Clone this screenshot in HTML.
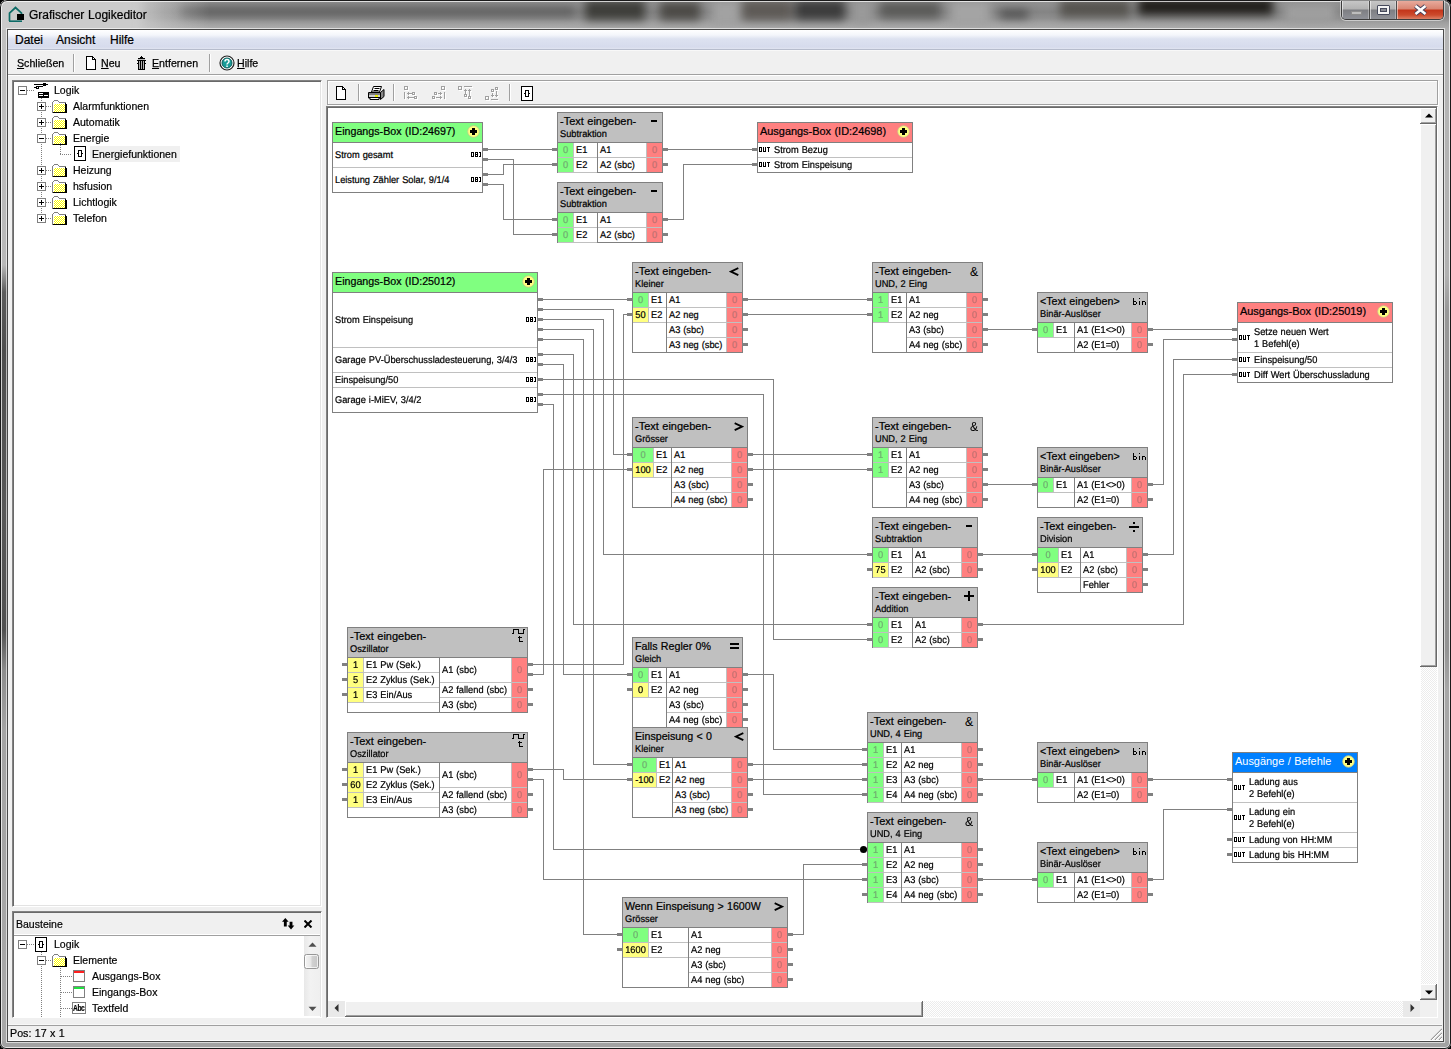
<!DOCTYPE html>
<html><head><meta charset="utf-8"><title>Grafischer Logikeditor</title>
<style>
html,body{margin:0;padding:0}
body{width:1451px;height:1049px;overflow:hidden;position:relative;font-family:"Liberation Sans",sans-serif;background:#9a9a9a}
#w div,#w svg.a,#w .sym{position:absolute}
.t{white-space:nowrap;word-spacing:.4px;-webkit-text-stroke:.22px}
.tr{font-size:11.2px;line-height:14px;color:#000;transform:scaleX(.94);transform-origin:0 0;-webkit-text-stroke:.2px}
.r{font-size:9.8px;transform:scaleX(.945);transform-origin:0 0;text-rendering:geometricPrecision;margin-top:1px}
.rc{font-size:9.8px;transform:scaleX(.945);text-align:center;text-rendering:geometricPrecision;margin-top:1px}
#w .t{color:#000}
#w{position:absolute;left:0;top:0;width:1451px;height:1049px;overflow:hidden}
.mn{font-size:12px;line-height:16px;color:#000}
.tb{font-size:11.2px;line-height:16px;color:#000;transform:scaleX(.95);transform-origin:0 0;-webkit-text-stroke:.25px}
u{text-decoration-thickness:1px;text-underline-offset:1px}
</style></head><body><svg width="0" height="0" style="position:absolute"><defs><pattern id="fd" width="2" height="2" patternUnits="userSpaceOnUse"><rect width="2" height="2" fill="#ffff00"/><rect width="1" height="1" fill="#fff"/><rect x="1" y="1" width="1" height="1" fill="#fff"/></pattern></defs></svg><div id="w">
<!-- glass frame -->
<div style="left:0;top:0;width:1451px;height:1049px;background:#000"></div>
<div style="left:0;top:0;width:1451px;height:1049px;border-radius:7px 7px 6px 6px;overflow:hidden;background:#a6a6a6">
 <div style="left:0;top:0;width:1451px;height:30px;background:linear-gradient(180deg,#949494 0,#8c8c8c 6px,#848484 12px,#8e8e8e 18px,#a0a0a0 23px,#adadad 29px)"></div>
 <div style="left:0;top:0;width:1451px;height:30px;filter:blur(5px)">
  <div style="left:-10px;top:-6px;width:150px;height:42px;background:#cdcdcd"></div>
  <div style="left:180px;top:7px;width:395px;height:9px;background:#5c5c5c"></div>
  <div style="left:585px;top:0px;width:60px;height:20px;background:#3e3e3a"></div>
  <div style="left:660px;top:2px;width:40px;height:18px;background:#4c4a46"></div>
  <div style="left:712px;top:0px;width:28px;height:26px;background:#a2a2a2"></div>
  <div style="left:742px;top:0px;width:50px;height:20px;background:#5e5a56"></div>
  <div style="left:795px;top:0px;width:50px;height:20px;background:#3c3c3c"></div>
  <div style="left:852px;top:0px;width:20px;height:24px;background:#9a9a9a"></div>
  <div style="left:880px;top:2px;width:60px;height:16px;background:#5a5a58"></div>
  <div style="left:950px;top:0px;width:40px;height:26px;background:#a4a4a4"></div>
  <div style="left:1000px;top:10px;width:28px;height:8px;background:#4a4a4a"></div>
  <div style="left:1060px;top:0px;width:70px;height:17px;background:#55534e"></div>
  <div style="left:1138px;top:-2px;width:135px;height:17px;background:#1f1d19"></div>
  <div style="left:1285px;top:4px;width:50px;height:18px;background:#a0a0a0"></div>
 </div>
 <div style="left:0;top:0;width:230px;height:30px;background:linear-gradient(90deg,#cbcbcb 0,#cbcbcb 130px,rgba(203,203,203,.5) 165px,rgba(203,203,203,0) 210px)"></div>
 <div style="left:0;top:30px;width:8px;height:1019px;background:linear-gradient(180deg,#c0c0c0 0,#b8b8b8 235px,#5c5c5c 262px,#4e4e4e 320px,#585858 480px,#505050 600px,#8c8c8c 640px,#a4a4a4 700px,#a8a8a8 1019px)"></div>
 <div style="left:1443px;top:30px;width:8px;height:1019px;background:linear-gradient(180deg,#b6b6b6 0,#b2b2b2 245px,#989898 280px,#949494 620px,#a8a8a8 660px,#a8a8a8 1019px)"></div>
 <div style="left:0;top:1041px;width:1451px;height:8px;background:#a2a2a2"></div>
 <div style="left:0;top:0;width:1451px;height:1049px;box-sizing:border-box;border:1px solid #1a1a1a;border-radius:7px 7px 6px 6px;box-shadow:inset 0 0 0 1px rgba(255,255,255,.72)"></div>
 <div style="left:6px;top:28px;width:1439px;height:1015px;box-sizing:border-box;border:1px solid rgba(255,255,255,.6)"></div>
</div>
<!-- title -->
<svg class="a" style="left:8px;top:6px" width="17" height="17"><path d="M1.5 15V7L7.5 1.5L13.5 7v2" fill="none" stroke="#0d6b66" stroke-width="1.700"/><path d="M1 15.2h13" stroke="#0d6b66" stroke-width="1.6"/><rect x="9" y="8" width="7" height="6" fill="#000"/></svg>
<div class="t" style="left:29px;top:7px;font-size:12px;line-height:16px;color:#000">Grafischer Logikeditor</div>
<!-- caption buttons -->
<div style="left:1341px;top:1px;width:103px;height:19px;border:1px solid #3c3c3c;border-top:0;border-radius:0 0 5px 5px;box-sizing:border-box;overflow:hidden;background:#888;box-shadow:0 0 0 1px rgba(255,255,255,.5)">
 <div style="left:0;top:0;width:27px;height:18px;background:linear-gradient(180deg,#c6c6c6 0,#b2b2b2 8px,#7d7e82 9px,#8f9198 18px);border-right:1px solid #4c4c4c;box-shadow:inset 1px 0 0 rgba(255,255,255,.55),inset -1px 0 0 rgba(255,255,255,.3)"></div>
 <div style="left:28px;top:0;width:26px;height:18px;background:linear-gradient(180deg,#c6c6c6 0,#b2b2b2 8px,#7d7e82 9px,#8f9198 18px);border-right:1px solid #4c4c4c;box-shadow:inset 1px 0 0 rgba(255,255,255,.55),inset -1px 0 0 rgba(255,255,255,.3)"></div>
 <div style="left:55px;top:0;width:47px;height:18px;background:linear-gradient(180deg,#e8aa9c 0,#d98572 8px,#c3351a 9px,#cc4a2c 14px,#dc8066 18px);box-shadow:inset 1px 0 0 rgba(255,255,255,.5),inset -1px 0 0 rgba(255,255,255,.4)"></div>
</div>
<div style="left:1351px;top:11px;width:11px;height:4px;background:#bdbdbd;border:1px solid #8d8d8d;box-sizing:border-box"></div>
<div style="left:1377px;top:5px;width:13px;height:10px;border:1px solid #464a5c;border-radius:1px;box-sizing:border-box;background:#f4f4f4"><div style="left:2px;top:2px;width:7px;height:4px;background:#8a8c94;border:1px solid #464a5c;box-sizing:border-box"></div></div>
<svg class="a" style="left:1413px;top:4px" width="15" height="12"><path d="M2.5 2l10 8M12.5 2l-10 8" stroke="#45405a" stroke-width="4.400" fill="none"/><path d="M2.5 2l10 8M12.5 2l-10 8" stroke="#fff" stroke-width="2.6" fill="none"/></svg>
<!-- client -->
<div style="left:7px;top:29px;width:1437px;height:1013px;box-sizing:border-box;border:1px solid #4a4a4a;background:#f0f0f0"></div>
<!-- menubar -->
<div style="left:8px;top:30px;width:1435px;height:20px;background:linear-gradient(180deg,#fff 0,#f4f6fb 5px,#dde2f0 9px,#d6dbec 17px,#e6e9f3 20px)"></div>
<div style="left:8px;top:49px;width:1435px;height:1px;background:#b6bccc"></div>
<div style="left:8px;top:50px;width:1435px;height:1px;background:#f8f8f8"></div>
<div class="t mn" style="left:15px;top:32px">Datei</div>
<div class="t mn" style="left:56px;top:32px">Ansicht</div>
<div class="t mn" style="left:110px;top:32px">Hilfe</div>
<!-- toolbar -->
<div class="t tb" style="left:17px;top:55px"><u>S</u>chließen</div>
<div style="left:73px;top:54px;width:1px;height:18px;background:#a0a0a0"></div><div style="left:74px;top:54px;width:1px;height:18px;background:#fff"></div>
<svg class="a" style="left:86px;top:56px" width="10" height="14" shape-rendering="crispEdges"><path d="M0.5 0.5h6l3 3v10h-9z" fill="#fff" stroke="#000"/><path d="M6.5 0.5v3h3" fill="none" stroke="#000"/></svg>
<div class="t tb" style="left:101px;top:55px"><u>N</u>eu</div>
<svg class="a" style="left:137px;top:56px" width="9" height="14" shape-rendering="crispEdges"><path d="M4 0h1v1h-1zM3 1h3v1h-3zM1 2h7v1h-7zM0 4h9v1h-9zM1 5h1v9h-1zM7 5h1v9h-1zM1 13h7v1h-7zM3 5h1v8h-1zM5 5h1v8h-1zM0 7h1v1h-1zM8 7h1v1h-1z" fill="#000"/><path d="M1 3h7v1h-7z" fill="#bbb"/><path d="M2 5h1v8h-1zM4 5h1v8h-1zM6 5h1v8h-1z" fill="#b0b0b0"/></svg>
<div class="t tb" style="left:152px;top:55px"><u>E</u>ntfernen</div>
<div style="left:209px;top:54px;width:1px;height:18px;background:#a0a0a0"></div><div style="left:210px;top:54px;width:1px;height:18px;background:#fff"></div>
<svg class="a" style="left:219px;top:55px" width="16" height="16"><circle cx="8" cy="8" r="7" fill="#fff" stroke="#222" stroke-width="1.2"/><circle cx="8" cy="8" r="5" fill="#1a9c98" stroke="#0a5c5a" stroke-width="1"/><path d="M6 6.5c0-2.6 4-2.6 4 0c0 1.5-2 1.5-2 3" fill="none" stroke="#fff" stroke-width="1.5"/><rect x="7.3" y="10.5" width="1.5" height="1.5" fill="#fff"/></svg>
<div class="t tb" style="left:237px;top:55px"><u>H</u>ilfe</div>
<div style="left:8px;top:74px;width:1435px;height:1px;background:#a0a0a0"></div>
<div style="left:8px;top:75px;width:1435px;height:1px;background:#fff"></div>
<div style="left:12px;top:80px;width:310px;height:827px;background:#fff;box-sizing:border-box;border:1px solid;border-color:#828282 #fff #fff #828282;box-shadow:inset 1px 1px 0 #696969,inset -1px -1px 0 #e3e3e3"></div>
<svg class="a" style="left:18px;top:86px" width="9" height="9" shape-rendering="crispEdges"><rect x="0.5" y="0.5" width="8" height="8" fill="#fff" stroke="#808080"/><rect x="2" y="4" width="5" height="1" fill="#000"/></svg>
<div style="left:27px;top:90px;width:8px;height:1px;background:repeating-linear-gradient(90deg,#808080 0 1px,transparent 1px 2px)"></div>
<svg class="a" style="left:34px;top:83px" width="16" height="16" shape-rendering="crispEdges"><path d="M0 1h14v1h-14zM0 4h3v1h-3zM5 3h4v1h-4zM9 2h1v1h-1zM2 3h1v3h-1zM2 3h3v1h-3zM4 3h1v3h-1zM2 5h3v1h-3zM9 0h1v3h-1zM9 0h3v1h-3zM11 0h1v3h-1zM9 2h3v1h-3z" fill="#000"/><rect x="4" y="9" width="11" height="6" fill="#000"/><rect x="5" y="10" width="4" height="1" fill="#fff"/><rect x="5" y="12" width="4" height="1" fill="#fff"/><rect x="10" y="12" width="4" height="1" fill="#fff"/></svg>
<div class="t tr" style="left:54px;top:83px;">Logik</div>
<div style="left:41px;top:98px;width:1px;height:120px;background:repeating-linear-gradient(180deg,#808080 0 1px,transparent 1px 2px)"></div>
<svg class="a" style="left:37px;top:102px" width="9" height="9" shape-rendering="crispEdges"><rect x="0.5" y="0.5" width="8" height="8" fill="#fff" stroke="#808080"/><rect x="2" y="4" width="5" height="1" fill="#000"/><rect x="4" y="2" width="1" height="5" fill="#000"/></svg>
<div style="left:46px;top:106px;width:6px;height:1px;background:repeating-linear-gradient(90deg,#808080 0 1px,transparent 1px 2px)"></div>
<svg class="a" style="left:52px;top:100px" width="15" height="13" shape-rendering="crispEdges"><path d="M2 0h4v1h-4zM1 1h1v1h-1zM6 1h1v1h-1zM7 2h6v1h-6zM0 2h1v10h-1z" fill="#808080"/><path d="M2 1h4v1h-4zM1 2h6v1h-6zM1 3h12v1h-12zM1 3h1v9h-1z" fill="#fff"/><rect x="2" y="4" width="11" height="8" fill="url(#fd)"/><path d="M13 3h1v9h-1zM1 12h14v1h-14zM14 4h1v9h-1z" fill="#000"/><path d="M13 2h1v1h-1zM0 12h1v1h-1z" fill="#808080"/></svg>
<div class="t tr" style="left:73px;top:99px;">Alarmfunktionen</div>
<svg class="a" style="left:37px;top:118px" width="9" height="9" shape-rendering="crispEdges"><rect x="0.5" y="0.5" width="8" height="8" fill="#fff" stroke="#808080"/><rect x="2" y="4" width="5" height="1" fill="#000"/><rect x="4" y="2" width="1" height="5" fill="#000"/></svg>
<div style="left:46px;top:122px;width:6px;height:1px;background:repeating-linear-gradient(90deg,#808080 0 1px,transparent 1px 2px)"></div>
<svg class="a" style="left:52px;top:116px" width="15" height="13" shape-rendering="crispEdges"><path d="M2 0h4v1h-4zM1 1h1v1h-1zM6 1h1v1h-1zM7 2h6v1h-6zM0 2h1v10h-1z" fill="#808080"/><path d="M2 1h4v1h-4zM1 2h6v1h-6zM1 3h12v1h-12zM1 3h1v9h-1z" fill="#fff"/><rect x="2" y="4" width="11" height="8" fill="url(#fd)"/><path d="M13 3h1v9h-1zM1 12h14v1h-14zM14 4h1v9h-1z" fill="#000"/><path d="M13 2h1v1h-1zM0 12h1v1h-1z" fill="#808080"/></svg>
<div class="t tr" style="left:73px;top:115px;">Automatik</div>
<svg class="a" style="left:37px;top:134px" width="9" height="9" shape-rendering="crispEdges"><rect x="0.5" y="0.5" width="8" height="8" fill="#fff" stroke="#808080"/><rect x="2" y="4" width="5" height="1" fill="#000"/></svg>
<div style="left:46px;top:138px;width:6px;height:1px;background:repeating-linear-gradient(90deg,#808080 0 1px,transparent 1px 2px)"></div>
<svg class="a" style="left:52px;top:132px" width="15" height="13" shape-rendering="crispEdges"><path d="M2 0h4v1h-4zM1 1h1v1h-1zM6 1h1v1h-1zM7 2h6v1h-6zM0 2h1v10h-1z" fill="#808080"/><path d="M2 1h4v1h-4zM1 2h6v1h-6zM1 3h12v1h-12zM1 3h1v9h-1z" fill="#fff"/><rect x="2" y="4" width="11" height="8" fill="url(#fd)"/><path d="M13 3h1v9h-1zM1 12h14v1h-14zM14 4h1v9h-1z" fill="#000"/><path d="M13 2h1v1h-1zM0 12h1v1h-1z" fill="#808080"/></svg>
<div class="t tr" style="left:73px;top:131px;">Energie</div>
<div style="left:60px;top:143px;width:1px;height:11px;background:repeating-linear-gradient(180deg,#808080 0 1px,transparent 1px 2px)"></div>
<div style="left:60px;top:154px;width:12px;height:1px;background:repeating-linear-gradient(90deg,#808080 0 1px,transparent 1px 2px)"></div>
<svg class="a" style="left:74px;top:146px" width="12" height="15" shape-rendering="crispEdges"><rect x="0.5" y="0.5" width="11" height="14" fill="#fff" stroke="#000"/><rect x="4.5" y="4.5" width="3" height="6" fill="none" stroke="#000"/><rect x="3" y="7" width="1" height="1" fill="#000"/><rect x="8" y="7" width="1" height="1" fill="#000"/></svg>
<div style="left:90px;top:146px;width:90px;height:16px;background:#f0f0f0"></div>
<div class="t tr" style="left:92px;top:147px;">Energiefunktionen</div>
<svg class="a" style="left:37px;top:166px" width="9" height="9" shape-rendering="crispEdges"><rect x="0.5" y="0.5" width="8" height="8" fill="#fff" stroke="#808080"/><rect x="2" y="4" width="5" height="1" fill="#000"/><rect x="4" y="2" width="1" height="5" fill="#000"/></svg>
<div style="left:46px;top:170px;width:6px;height:1px;background:repeating-linear-gradient(90deg,#808080 0 1px,transparent 1px 2px)"></div>
<svg class="a" style="left:52px;top:164px" width="15" height="13" shape-rendering="crispEdges"><path d="M2 0h4v1h-4zM1 1h1v1h-1zM6 1h1v1h-1zM7 2h6v1h-6zM0 2h1v10h-1z" fill="#808080"/><path d="M2 1h4v1h-4zM1 2h6v1h-6zM1 3h12v1h-12zM1 3h1v9h-1z" fill="#fff"/><rect x="2" y="4" width="11" height="8" fill="url(#fd)"/><path d="M13 3h1v9h-1zM1 12h14v1h-14zM14 4h1v9h-1z" fill="#000"/><path d="M13 2h1v1h-1zM0 12h1v1h-1z" fill="#808080"/></svg>
<div class="t tr" style="left:73px;top:163px;">Heizung</div>
<svg class="a" style="left:37px;top:182px" width="9" height="9" shape-rendering="crispEdges"><rect x="0.5" y="0.5" width="8" height="8" fill="#fff" stroke="#808080"/><rect x="2" y="4" width="5" height="1" fill="#000"/><rect x="4" y="2" width="1" height="5" fill="#000"/></svg>
<div style="left:46px;top:186px;width:6px;height:1px;background:repeating-linear-gradient(90deg,#808080 0 1px,transparent 1px 2px)"></div>
<svg class="a" style="left:52px;top:180px" width="15" height="13" shape-rendering="crispEdges"><path d="M2 0h4v1h-4zM1 1h1v1h-1zM6 1h1v1h-1zM7 2h6v1h-6zM0 2h1v10h-1z" fill="#808080"/><path d="M2 1h4v1h-4zM1 2h6v1h-6zM1 3h12v1h-12zM1 3h1v9h-1z" fill="#fff"/><rect x="2" y="4" width="11" height="8" fill="url(#fd)"/><path d="M13 3h1v9h-1zM1 12h14v1h-14zM14 4h1v9h-1z" fill="#000"/><path d="M13 2h1v1h-1zM0 12h1v1h-1z" fill="#808080"/></svg>
<div class="t tr" style="left:73px;top:179px;">hsfusion</div>
<svg class="a" style="left:37px;top:198px" width="9" height="9" shape-rendering="crispEdges"><rect x="0.5" y="0.5" width="8" height="8" fill="#fff" stroke="#808080"/><rect x="2" y="4" width="5" height="1" fill="#000"/><rect x="4" y="2" width="1" height="5" fill="#000"/></svg>
<div style="left:46px;top:202px;width:6px;height:1px;background:repeating-linear-gradient(90deg,#808080 0 1px,transparent 1px 2px)"></div>
<svg class="a" style="left:52px;top:196px" width="15" height="13" shape-rendering="crispEdges"><path d="M2 0h4v1h-4zM1 1h1v1h-1zM6 1h1v1h-1zM7 2h6v1h-6zM0 2h1v10h-1z" fill="#808080"/><path d="M2 1h4v1h-4zM1 2h6v1h-6zM1 3h12v1h-12zM1 3h1v9h-1z" fill="#fff"/><rect x="2" y="4" width="11" height="8" fill="url(#fd)"/><path d="M13 3h1v9h-1zM1 12h14v1h-14zM14 4h1v9h-1z" fill="#000"/><path d="M13 2h1v1h-1zM0 12h1v1h-1z" fill="#808080"/></svg>
<div class="t tr" style="left:73px;top:195px;">Lichtlogik</div>
<svg class="a" style="left:37px;top:214px" width="9" height="9" shape-rendering="crispEdges"><rect x="0.5" y="0.5" width="8" height="8" fill="#fff" stroke="#808080"/><rect x="2" y="4" width="5" height="1" fill="#000"/><rect x="4" y="2" width="1" height="5" fill="#000"/></svg>
<div style="left:46px;top:218px;width:6px;height:1px;background:repeating-linear-gradient(90deg,#808080 0 1px,transparent 1px 2px)"></div>
<svg class="a" style="left:52px;top:212px" width="15" height="13" shape-rendering="crispEdges"><path d="M2 0h4v1h-4zM1 1h1v1h-1zM6 1h1v1h-1zM7 2h6v1h-6zM0 2h1v10h-1z" fill="#808080"/><path d="M2 1h4v1h-4zM1 2h6v1h-6zM1 3h12v1h-12zM1 3h1v9h-1z" fill="#fff"/><rect x="2" y="4" width="11" height="8" fill="url(#fd)"/><path d="M13 3h1v9h-1zM1 12h14v1h-14zM14 4h1v9h-1z" fill="#000"/><path d="M13 2h1v1h-1zM0 12h1v1h-1z" fill="#808080"/></svg>
<div class="t tr" style="left:73px;top:211px;">Telefon</div>
<div style="left:12px;top:911px;width:310px;height:107px;background:#f0f0f0;box-sizing:border-box;border:1px solid;border-color:#828282 #fff #fff #828282;box-shadow:inset 1px 1px 0 #696969,inset -1px -1px 0 #e3e3e3"></div>
<div class="t tr" style="left:16px;top:917px;">Bausteine</div>
<svg class="a" style="left:282px;top:918px" width="14" height="12"><path d="M3.5 0L7 4H5v5H2V4H0zM9.5 12L6 8h2V4h3v4h2z" fill="#000" transform="scale(0.95)"/></svg>
<svg class="a" style="left:304px;top:920px" width="9" height="8"><path d="M0.5 0.5l7 7M7.5 0.5l-7 7" stroke="#000" stroke-width="2" fill="none"/></svg>
<div style="left:14px;top:934px;width:306px;height:1px;background:#fff"></div><div style="left:14px;top:935px;width:306px;height:81px;background:#fff;border-top:1px solid #a0a0a0"></div>
<svg class="a" style="left:18px;top:940px" width="9" height="9" shape-rendering="crispEdges"><rect x="0.5" y="0.5" width="8" height="8" fill="#fff" stroke="#808080"/><rect x="2" y="4" width="5" height="1" fill="#000"/></svg>
<div style="left:27px;top:944px;width:8px;height:1px;background:repeating-linear-gradient(90deg,#808080 0 1px,transparent 1px 2px)"></div>
<svg class="a" style="left:35px;top:937px" width="12" height="15" shape-rendering="crispEdges"><rect x="0.5" y="0.5" width="11" height="14" fill="#fff" stroke="#000"/><rect x="4.5" y="4.5" width="3" height="6" fill="none" stroke="#000"/><rect x="3" y="7" width="1" height="1" fill="#000"/><rect x="8" y="7" width="1" height="1" fill="#000"/></svg>
<div class="t tr" style="left:54px;top:937px;">Logik</div>
<div style="left:41px;top:952px;width:1px;height:66px;background:repeating-linear-gradient(180deg,#808080 0 1px,transparent 1px 2px)"></div>
<svg class="a" style="left:37px;top:956px" width="9" height="9" shape-rendering="crispEdges"><rect x="0.5" y="0.5" width="8" height="8" fill="#fff" stroke="#808080"/><rect x="2" y="4" width="5" height="1" fill="#000"/></svg>
<div style="left:46px;top:960px;width:6px;height:1px;background:repeating-linear-gradient(90deg,#808080 0 1px,transparent 1px 2px)"></div>
<svg class="a" style="left:52px;top:954px" width="15" height="13" shape-rendering="crispEdges"><path d="M2 0h4v1h-4zM1 1h1v1h-1zM6 1h1v1h-1zM7 2h6v1h-6zM0 2h1v10h-1z" fill="#808080"/><path d="M2 1h4v1h-4zM1 2h6v1h-6zM1 3h12v1h-12zM1 3h1v9h-1z" fill="#fff"/><rect x="2" y="4" width="11" height="8" fill="url(#fd)"/><path d="M13 3h1v9h-1zM1 12h14v1h-14zM14 4h1v9h-1z" fill="#000"/><path d="M13 2h1v1h-1zM0 12h1v1h-1z" fill="#808080"/></svg>
<div class="t tr" style="left:73px;top:953px;">Elemente</div>
<div style="left:60px;top:968px;width:1px;height:50px;background:repeating-linear-gradient(180deg,#808080 0 1px,transparent 1px 2px)"></div>
<div style="left:61px;top:976px;width:11px;height:1px;background:repeating-linear-gradient(90deg,#808080 0 1px,transparent 1px 2px)"></div>
<svg class="a" style="left:73px;top:970px" width="12" height="12" shape-rendering="crispEdges"><rect x="0.5" y="0.5" width="11" height="11" fill="#fff" stroke="#808080"/><rect x="1" y="1" width="10" height="2" fill="#ff2020"/></svg>
<div class="t tr" style="left:92px;top:969px;">Ausgangs-Box</div>
<div style="left:61px;top:992px;width:11px;height:1px;background:repeating-linear-gradient(90deg,#808080 0 1px,transparent 1px 2px)"></div>
<svg class="a" style="left:73px;top:986px" width="12" height="12" shape-rendering="crispEdges"><rect x="0.5" y="0.5" width="11" height="11" fill="#fff" stroke="#808080"/><rect x="1" y="1" width="10" height="2" fill="#20e040"/></svg>
<div class="t tr" style="left:92px;top:985px;">Eingangs-Box</div>
<div style="left:61px;top:1008px;width:11px;height:1px;background:repeating-linear-gradient(90deg,#808080 0 1px,transparent 1px 2px)"></div>
<svg class="a" style="left:72px;top:1002px" width="14" height="12" shape-rendering="crispEdges"><rect x="0.5" y="0.5" width="13" height="11" fill="#fff" stroke="#808080"/></svg><div class="t" style="left:73px;top:1003px;font-size:8.5px;line-height:10px;font-weight:bold;letter-spacing:-0.5px;transform:scaleX(0.78);transform-origin:0 0">Abc</div>
<div class="t tr" style="left:92px;top:1001px;">Textfeld</div>
<div style="left:304px;top:936px;width:16px;height:80px;background:linear-gradient(90deg,#e8e8e8,#f2f2f2 40%,#efefef)"></div>
<svg class="a" style="left:308px;top:942px" width="9" height="5"><path d="M0.5 4.800L4.5 0.5L8.5 4.800z" fill="#505050"/></svg>
<svg class="a" style="left:308px;top:1006px" width="9" height="6"><path d="M0.5 0.800L4.5 5L8.5 0.800z" fill="#505050"/></svg>
<div style="left:304px;top:954px;width:15px;height:15px;border:1px solid #979797;border-radius:2.5px;box-sizing:border-box;background:linear-gradient(90deg,#f4f4f4 0,#e6e6e6 48%,#d2d2d2 52%,#c6c6c6 100%);box-shadow:inset 0 0 0 1px rgba(255,255,255,.7)"></div>
<!-- right toolbar box -->
<div style="left:327px;top:80px;width:1111px;height:25px;border:1px solid #a0a0a0;box-sizing:border-box;box-shadow:inset 1px 1px 0 #fff,1px 1px 0 #fff"></div>
<svg class="a" style="left:336px;top:86px" width="10" height="14" shape-rendering="crispEdges"><path d="M0.5 0.5h6l3 3v10h-9z" fill="#fff" stroke="#000"/><path d="M6.5 0.5v3h3" fill="none" stroke="#000"/></svg>
<div style="left:358px;top:84px;width:1px;height:17px;background:#a0a0a0"></div><div style="left:359px;top:84px;width:1px;height:17px;background:#fff"></div>
<svg class="a" style="left:368px;top:86px" width="17" height="14"><path d="M5.5 0.5h8l-2 5.5h-8z" fill="#fff" stroke="#000"/><path d="M6.5 2.5h5M5.5 4.5h5" stroke="#000" stroke-width="1"/><path d="M12.5 6.5l3.5-3v7l-3.5 3z" fill="#8a8a8a" stroke="#000"/><path d="M0.5 6.5h12v5.5h-1.5v1.5h-9v-1.5h-1.5z" fill="#fff" stroke="#000"/><rect x="1" y="9" width="11" height="2" fill="#d0d0d0"/><rect x="7" y="9" width="3" height="2" fill="#f0f000"/><rect x="0" y="7.5" width="12" height="1" fill="#000"/><rect x="1" y="11" width="11" height="1" fill="#000"/></svg>
<div style="left:393px;top:84px;width:1px;height:17px;background:#a0a0a0"></div><div style="left:394px;top:84px;width:1px;height:17px;background:#fff"></div>
<svg class="a" style="left:398px;top:82px" width="110" height="22" shape-rendering="crispEdges"><g fill="#fff" transform="translate(1,1)"><path d="M6 4h4v4h-4zM7 5v2h2v-2zM14 10h3v3h-3zM15 11v1h1v-1zM16 14h3v3h-3zM17 15v1h1v-1zM43 4h4v4h-4zM44 5v2h2v-2zM36 10h3v3h-3zM37 11v1h1v-1zM34 14h3v3h-3zM35 15v1h1v-1zM60 4h4v4h-4zM61 5v2h2v-2zM66 12h3v3h-3zM67 13v1h1v-1zM70 14h3v3h-3zM71 15v1h1v-1zM87 14h4v4h-4zM88 15v2h2v-2zM93 7h3v3h-3zM94 8v1h1v-1zM97 5h3v3h-3zM98 6v1h1v-1z" fill-rule="evenodd"/><path d="M6 10h1v7h-1z"/><path d="M9 11h5v1h-5z"/><path d="M10 10h1v3h-1z"/><path d="M9 15h7v1h-7z"/><path d="M10 14h1v3h-1z"/><path d="M46 10h1v7h-1z"/><path d="M40 11h4v1h-4z"/><path d="M42 10h1v3h-1z"/><path d="M38 15h6v1h-6z"/><path d="M42 14h1v3h-1z"/><path d="M66 4h8v1h-8z"/><path d="M67 7h1v5h-1z"/><path d="M66 8h3v1h-3z"/><path d="M71 7h1v7h-1z"/><path d="M70 8h3v1h-3z"/><path d="M93 17h7v1h-7z"/><path d="M94 11h1v4h-1z"/><path d="M93 13h3v1h-3z"/><path d="M98 9h1v6h-1z"/><path d="M97 13h3v1h-3z"/></g><g fill="#a0a0a0"><path d="M6 4h4v4h-4zM7 5v2h2v-2zM14 10h3v3h-3zM15 11v1h1v-1zM16 14h3v3h-3zM17 15v1h1v-1zM43 4h4v4h-4zM44 5v2h2v-2zM36 10h3v3h-3zM37 11v1h1v-1zM34 14h3v3h-3zM35 15v1h1v-1zM60 4h4v4h-4zM61 5v2h2v-2zM66 12h3v3h-3zM67 13v1h1v-1zM70 14h3v3h-3zM71 15v1h1v-1zM87 14h4v4h-4zM88 15v2h2v-2zM93 7h3v3h-3zM94 8v1h1v-1zM97 5h3v3h-3zM98 6v1h1v-1z" fill-rule="evenodd"/><path d="M6 10h1v7h-1z"/><path d="M9 11h5v1h-5z"/><path d="M10 10h1v3h-1z"/><path d="M9 15h7v1h-7z"/><path d="M10 14h1v3h-1z"/><path d="M46 10h1v7h-1z"/><path d="M40 11h4v1h-4z"/><path d="M42 10h1v3h-1z"/><path d="M38 15h6v1h-6z"/><path d="M42 14h1v3h-1z"/><path d="M66 4h8v1h-8z"/><path d="M67 7h1v5h-1z"/><path d="M66 8h3v1h-3z"/><path d="M71 7h1v7h-1z"/><path d="M70 8h3v1h-3z"/><path d="M93 17h7v1h-7z"/><path d="M94 11h1v4h-1z"/><path d="M93 13h3v1h-3z"/><path d="M98 9h1v6h-1z"/><path d="M97 13h3v1h-3z"/></g></svg>
<div style="left:509px;top:84px;width:1px;height:17px;background:#a0a0a0"></div><div style="left:510px;top:84px;width:1px;height:17px;background:#fff"></div>
<svg class="a" style="left:521px;top:86px" width="12" height="15" shape-rendering="crispEdges"><rect x="0.5" y="0.5" width="11" height="14" fill="#fff" stroke="#000"/><rect x="4.5" y="4.5" width="3" height="6" fill="none" stroke="#000"/><rect x="3" y="7" width="1" height="1" fill="#000"/><rect x="8" y="7" width="1" height="1" fill="#000"/></svg>
<!-- canvas -->
<div style="left:326px;top:106px;width:1112px;height:912px;background:#fff;box-sizing:border-box;border:1px solid;border-color:#828282 #fff #fff #828282;box-shadow:inset 1px 1px 0 #696969"></div>
<div id="dia">
<div style="left:332px;top:122px;width:151px;height:71px;background:#fff;border:1px solid #808080;box-sizing:border-box;"></div>
<div style="left:333px;top:123px;width:149px;height:19px;background:#80ff80;"></div>
<div style="left:333px;top:142px;width:149px;height:1px;background:#808080;"></div>
<div class="t" style="left:335px;top:124px;font-size:10.7px;line-height:14px;">Eingangs-Box (ID:24697)</div>
<svg class="a" style="left:467px;top:125px" width="13" height="13" viewBox="0 0 13 13"><circle cx="6.5" cy="6.5" r="5.8" fill="#ffff80" stroke="#c8c88a" stroke-width="0.8"/><path d="M5 3h3v2h2v3h-2v2h-3v-2h-2v-3h2z" fill="#000"/></svg>
<div class="t r" style="left:335px;top:149px;line-height:12px;">Strom gesamt</div>
<svg class="a" style="left:471px;top:152px" width="10" height="5" viewBox="0 0 10 5" shape-rendering="crispEdges"><path d="M0 0h3v5h-3zM1 1v3h1v-3zM4 0h3v5h-3zM5 1v1h1v-1zM5 3v1h1v-1zM8 0h2v5h-2v-1h1v-3h-1z" fill="#000" fill-rule="evenodd"/></svg>
<div style="left:333px;top:167px;width:149px;height:1px;background:#c0c0c0;"></div>
<div style="left:483px;top:148px;width:5px;height:3px;background:#808080;"></div>
<div style="left:483px;top:158px;width:5px;height:3px;background:#808080;"></div>
<div class="t r" style="left:335px;top:174px;line-height:12px;">Leistung Zähler Solar, 9/1/4</div>
<svg class="a" style="left:471px;top:177px" width="10" height="5" viewBox="0 0 10 5" shape-rendering="crispEdges"><path d="M0 0h3v5h-3zM1 1v3h1v-3zM4 0h3v5h-3zM5 1v1h1v-1zM5 3v1h1v-1zM8 0h2v5h-2v-1h1v-3h-1z" fill="#000" fill-rule="evenodd"/></svg>
<div style="left:483px;top:173px;width:5px;height:3px;background:#808080;"></div>
<div style="left:483px;top:183px;width:5px;height:3px;background:#808080;"></div>
<div style="left:757px;top:122px;width:156px;height:51px;background:#fff;border:1px solid #808080;box-sizing:border-box;"></div>
<div style="left:758px;top:123px;width:154px;height:19px;background:#ff8080;"></div>
<div style="left:758px;top:142px;width:154px;height:1px;background:#808080;"></div>
<div class="t" style="left:760px;top:124px;font-size:10.93px;line-height:14px;">Ausgangs-Box (ID:24698)</div>
<svg class="a" style="left:897px;top:125px" width="13" height="13" viewBox="0 0 13 13"><circle cx="6.5" cy="6.5" r="5.8" fill="#ffff80" stroke="#c8c88a" stroke-width="0.8"/><path d="M5 3h3v2h2v3h-2v2h-3v-2h-2v-3h2z" fill="#000"/></svg>
<div class="t r" style="left:774px;top:144px;line-height:12px;">Strom Bezug</div>
<svg class="a" style="left:759px;top:147px" width="11" height="5" viewBox="0 0 11 5" shape-rendering="crispEdges"><path d="M0 0h3v5h-3zM1 1v3h1v-3zM4 0h1v4h1v-4h1v5h-3zM8 0h3v1h-1v4h-1v-4h-1z" fill="#000" fill-rule="evenodd"/></svg>
<div style="left:758px;top:157px;width:154px;height:1px;background:#c0c0c0;"></div>
<div style="left:752px;top:148px;width:5px;height:3px;background:#808080;"></div>
<div class="t r" style="left:774px;top:159px;line-height:12px;">Strom Einspeisung</div>
<svg class="a" style="left:759px;top:162px" width="11" height="5" viewBox="0 0 11 5" shape-rendering="crispEdges"><path d="M0 0h3v5h-3zM1 1v3h1v-3zM4 0h1v4h1v-4h1v5h-3zM8 0h3v1h-1v4h-1v-4h-1z" fill="#000" fill-rule="evenodd"/></svg>
<div style="left:752px;top:163px;width:5px;height:3px;background:#808080;"></div>
<div style="left:332px;top:272px;width:206px;height:141px;background:#fff;border:1px solid #808080;box-sizing:border-box;"></div>
<div style="left:333px;top:273px;width:204px;height:19px;background:#80ff80;"></div>
<div style="left:333px;top:292px;width:204px;height:1px;background:#808080;"></div>
<div class="t" style="left:335px;top:274px;font-size:10.7px;line-height:14px;">Eingangs-Box (ID:25012)</div>
<svg class="a" style="left:522px;top:275px" width="13" height="13" viewBox="0 0 13 13"><circle cx="6.5" cy="6.5" r="5.8" fill="#ffff80" stroke="#c8c88a" stroke-width="0.8"/><path d="M5 3h3v2h2v3h-2v2h-3v-2h-2v-3h2z" fill="#000"/></svg>
<div class="t r" style="left:335px;top:314px;line-height:12px;">Strom Einspeisung</div>
<svg class="a" style="left:526px;top:317px" width="10" height="5" viewBox="0 0 10 5" shape-rendering="crispEdges"><path d="M0 0h3v5h-3zM1 1v3h1v-3zM4 0h3v5h-3zM5 1v1h1v-1zM5 3v1h1v-1zM8 0h2v5h-2v-1h1v-3h-1z" fill="#000" fill-rule="evenodd"/></svg>
<div style="left:333px;top:347px;width:204px;height:1px;background:#c0c0c0;"></div>
<div style="left:538px;top:298px;width:5px;height:3px;background:#808080;"></div>
<div style="left:538px;top:308px;width:5px;height:3px;background:#808080;"></div>
<div style="left:538px;top:318px;width:5px;height:3px;background:#808080;"></div>
<div style="left:538px;top:328px;width:5px;height:3px;background:#808080;"></div>
<div style="left:538px;top:338px;width:5px;height:3px;background:#808080;"></div>
<div class="t r" style="left:335px;top:354px;line-height:12px;">Garage PV-Überschussladesteuerung, 3/4/3</div>
<svg class="a" style="left:526px;top:357px" width="10" height="5" viewBox="0 0 10 5" shape-rendering="crispEdges"><path d="M0 0h3v5h-3zM1 1v3h1v-3zM4 0h3v5h-3zM5 1v1h1v-1zM5 3v1h1v-1zM8 0h2v5h-2v-1h1v-3h-1z" fill="#000" fill-rule="evenodd"/></svg>
<div style="left:333px;top:372px;width:204px;height:1px;background:#c0c0c0;"></div>
<div style="left:538px;top:353px;width:5px;height:3px;background:#808080;"></div>
<div style="left:538px;top:363px;width:5px;height:3px;background:#808080;"></div>
<div class="t r" style="left:335px;top:374px;line-height:12px;">Einspeisung/50</div>
<svg class="a" style="left:526px;top:377px" width="10" height="5" viewBox="0 0 10 5" shape-rendering="crispEdges"><path d="M0 0h3v5h-3zM1 1v3h1v-3zM4 0h3v5h-3zM5 1v1h1v-1zM5 3v1h1v-1zM8 0h2v5h-2v-1h1v-3h-1z" fill="#000" fill-rule="evenodd"/></svg>
<div style="left:333px;top:387px;width:204px;height:1px;background:#c0c0c0;"></div>
<div style="left:538px;top:378px;width:5px;height:3px;background:#808080;"></div>
<div class="t r" style="left:335px;top:394px;line-height:12px;">Garage i-MiEV, 3/4/2</div>
<svg class="a" style="left:526px;top:397px" width="10" height="5" viewBox="0 0 10 5" shape-rendering="crispEdges"><path d="M0 0h3v5h-3zM1 1v3h1v-3zM4 0h3v5h-3zM5 1v1h1v-1zM5 3v1h1v-1zM8 0h2v5h-2v-1h1v-3h-1z" fill="#000" fill-rule="evenodd"/></svg>
<div style="left:538px;top:393px;width:5px;height:3px;background:#808080;"></div>
<div style="left:538px;top:403px;width:5px;height:3px;background:#808080;"></div>
<div style="left:1237px;top:302px;width:156px;height:81px;background:#fff;border:1px solid #808080;box-sizing:border-box;"></div>
<div style="left:1238px;top:303px;width:154px;height:19px;background:#ff8080;"></div>
<div style="left:1238px;top:322px;width:154px;height:1px;background:#808080;"></div>
<div class="t" style="left:1240px;top:304px;font-size:10.93px;line-height:14px;">Ausgangs-Box (ID:25019)</div>
<svg class="a" style="left:1377px;top:305px" width="13" height="13" viewBox="0 0 13 13"><circle cx="6.5" cy="6.5" r="5.8" fill="#ffff80" stroke="#c8c88a" stroke-width="0.8"/><path d="M5 3h3v2h2v3h-2v2h-3v-2h-2v-3h2z" fill="#000"/></svg>
<div class="t r" style="left:1254px;top:326px;line-height:12px;">Setze neuen Wert</div>
<div class="t r" style="left:1254px;top:338px;line-height:12px;">1 Befehl(e)</div>
<svg class="a" style="left:1239px;top:335px" width="11" height="5" viewBox="0 0 11 5" shape-rendering="crispEdges"><path d="M0 0h3v5h-3zM1 1v3h1v-3zM4 0h1v4h1v-4h1v5h-3zM8 0h3v1h-1v4h-1v-4h-1z" fill="#000" fill-rule="evenodd"/></svg>
<div style="left:1238px;top:352px;width:154px;height:1px;background:#c0c0c0;"></div>
<div style="left:1232px;top:328px;width:5px;height:3px;background:#808080;"></div>
<div style="left:1232px;top:338px;width:5px;height:3px;background:#808080;"></div>
<div class="t r" style="left:1254px;top:354px;line-height:12px;">Einspeisung/50</div>
<svg class="a" style="left:1239px;top:357px" width="11" height="5" viewBox="0 0 11 5" shape-rendering="crispEdges"><path d="M0 0h3v5h-3zM1 1v3h1v-3zM4 0h1v4h1v-4h1v5h-3zM8 0h3v1h-1v4h-1v-4h-1z" fill="#000" fill-rule="evenodd"/></svg>
<div style="left:1238px;top:367px;width:154px;height:1px;background:#c0c0c0;"></div>
<div style="left:1232px;top:358px;width:5px;height:3px;background:#808080;"></div>
<div class="t r" style="left:1254px;top:369px;line-height:12px;">Diff Wert Überschussladung</div>
<svg class="a" style="left:1239px;top:372px" width="11" height="5" viewBox="0 0 11 5" shape-rendering="crispEdges"><path d="M0 0h3v5h-3zM1 1v3h1v-3zM4 0h1v4h1v-4h1v5h-3zM8 0h3v1h-1v4h-1v-4h-1z" fill="#000" fill-rule="evenodd"/></svg>
<div style="left:1232px;top:373px;width:5px;height:3px;background:#808080;"></div>
<div style="left:1232px;top:752px;width:126px;height:111px;background:#fff;border:1px solid #808080;box-sizing:border-box;"></div>
<div style="left:1233px;top:753px;width:124px;height:19px;background:#0080ff;"></div>
<div style="left:1233px;top:772px;width:124px;height:1px;background:#808080;"></div>
<div class="t" style="left:1235px;top:754px;font-size:10.95px;line-height:14px;color:#fff;-webkit-text-stroke:0;">Ausgänge / Befehle</div>
<svg class="a" style="left:1342px;top:755px" width="13" height="13" viewBox="0 0 13 13"><circle cx="6.5" cy="6.5" r="5.8" fill="#ffff80" stroke="#c8c88a" stroke-width="0.8"/><path d="M5 3h3v2h2v3h-2v2h-3v-2h-2v-3h2z" fill="#000"/></svg>
<div class="t r" style="left:1249px;top:776px;line-height:12px;">Ladung aus</div>
<div class="t r" style="left:1249px;top:788px;line-height:12px;">2 Befehl(e)</div>
<svg class="a" style="left:1234px;top:785px" width="11" height="5" viewBox="0 0 11 5" shape-rendering="crispEdges"><path d="M0 0h3v5h-3zM1 1v3h1v-3zM4 0h1v4h1v-4h1v5h-3zM8 0h3v1h-1v4h-1v-4h-1z" fill="#000" fill-rule="evenodd"/></svg>
<div style="left:1233px;top:802px;width:124px;height:1px;background:#c0c0c0;"></div>
<div style="left:1227px;top:778px;width:5px;height:3px;background:#808080;"></div>
<div class="t r" style="left:1249px;top:806px;line-height:12px;">Ladung ein</div>
<div class="t r" style="left:1249px;top:818px;line-height:12px;">2 Befehl(e)</div>
<svg class="a" style="left:1234px;top:815px" width="11" height="5" viewBox="0 0 11 5" shape-rendering="crispEdges"><path d="M0 0h3v5h-3zM1 1v3h1v-3zM4 0h1v4h1v-4h1v5h-3zM8 0h3v1h-1v4h-1v-4h-1z" fill="#000" fill-rule="evenodd"/></svg>
<div style="left:1233px;top:832px;width:124px;height:1px;background:#c0c0c0;"></div>
<div style="left:1227px;top:808px;width:5px;height:3px;background:#808080;"></div>
<div class="t r" style="left:1249px;top:834px;line-height:12px;">Ladung von HH:MM</div>
<svg class="a" style="left:1234px;top:837px" width="11" height="5" viewBox="0 0 11 5" shape-rendering="crispEdges"><path d="M0 0h3v5h-3zM1 1v3h1v-3zM4 0h1v4h1v-4h1v5h-3zM8 0h3v1h-1v4h-1v-4h-1z" fill="#000" fill-rule="evenodd"/></svg>
<div style="left:1233px;top:847px;width:124px;height:1px;background:#c0c0c0;"></div>
<div style="left:1227px;top:838px;width:5px;height:3px;background:#808080;"></div>
<div class="t r" style="left:1249px;top:849px;line-height:12px;">Ladung bis HH:MM</div>
<svg class="a" style="left:1234px;top:852px" width="11" height="5" viewBox="0 0 11 5" shape-rendering="crispEdges"><path d="M0 0h3v5h-3zM1 1v3h1v-3zM4 0h1v4h1v-4h1v5h-3zM8 0h3v1h-1v4h-1v-4h-1z" fill="#000" fill-rule="evenodd"/></svg>
<div style="left:1227px;top:853px;width:5px;height:3px;background:#808080;"></div>
<div style="left:557px;top:112px;width:106px;height:61px;background:#fff;border:1px solid #808080;box-sizing:border-box;"></div>
<div style="left:558px;top:113px;width:104px;height:29px;background:#c0c0c0;"></div>
<div style="left:558px;top:142px;width:104px;height:1px;background:#808080;"></div>
<div class="t" style="left:560px;top:114px;font-size:11px;line-height:14px;">-Text eingeben-</div>
<div class="t r" style="left:560px;top:128px;line-height:12px;">Subtraktion</div>
<svg class="a" style="left:651px;top:120px" width="6" height="2" shape-rendering="crispEdges"><rect width="6" height="2" fill="#000"/></svg>
<div style="left:597px;top:143px;width:1px;height:29px;background:#808080;"></div>
<div style="left:558px;top:143px;width:15px;height:14px;background:#80ff80;"></div>
<div style="left:573px;top:143px;width:1px;height:14px;background:#c0c0c0;"></div>
<div class="t rc" style="left:558px;top:143px;width:15px;line-height:14px;color:#70ac70">0</div>
<div class="t r" style="left:576px;top:143px;line-height:14px;">E1</div>
<div style="left:558px;top:157px;width:39px;height:1px;background:#c0c0c0;"></div>
<div style="left:552px;top:148px;width:5px;height:3px;background:#808080;"></div>
<div style="left:558px;top:158px;width:15px;height:14px;background:#80ff80;"></div>
<div style="left:573px;top:158px;width:1px;height:14px;background:#c0c0c0;"></div>
<div class="t rc" style="left:558px;top:158px;width:15px;line-height:14px;color:#70ac70">0</div>
<div class="t r" style="left:576px;top:158px;line-height:14px;">E2</div>
<div style="left:558px;top:172px;width:39px;height:1px;background:#c0c0c0;"></div>
<div style="left:552px;top:163px;width:5px;height:3px;background:#808080;"></div>
<div style="left:647px;top:143px;width:15px;height:14px;background:#ff8080;"></div>
<div style="left:646px;top:143px;width:1px;height:14px;background:#c0c0c0;"></div>
<div class="t rc" style="left:647px;top:143px;width:15px;line-height:14px;color:#c07070">0</div>
<div class="t r" style="left:600px;top:143px;line-height:14px;">A1</div>
<div style="left:598px;top:157px;width:64px;height:1px;background:#c0c0c0;"></div>
<div style="left:663px;top:148px;width:5px;height:3px;background:#808080;"></div>
<div style="left:647px;top:158px;width:15px;height:14px;background:#ff8080;"></div>
<div style="left:646px;top:158px;width:1px;height:14px;background:#c0c0c0;"></div>
<div class="t rc" style="left:647px;top:158px;width:15px;line-height:14px;color:#c07070">0</div>
<div class="t r" style="left:600px;top:158px;line-height:14px;">A2 (sbc)</div>
<div style="left:663px;top:163px;width:5px;height:3px;background:#808080;"></div>
<div style="left:557px;top:182px;width:106px;height:61px;background:#fff;border:1px solid #808080;box-sizing:border-box;"></div>
<div style="left:558px;top:183px;width:104px;height:29px;background:#c0c0c0;"></div>
<div style="left:558px;top:212px;width:104px;height:1px;background:#808080;"></div>
<div class="t" style="left:560px;top:184px;font-size:11px;line-height:14px;">-Text eingeben-</div>
<div class="t r" style="left:560px;top:198px;line-height:12px;">Subtraktion</div>
<svg class="a" style="left:651px;top:190px" width="6" height="2" shape-rendering="crispEdges"><rect width="6" height="2" fill="#000"/></svg>
<div style="left:597px;top:213px;width:1px;height:29px;background:#808080;"></div>
<div style="left:558px;top:213px;width:15px;height:14px;background:#80ff80;"></div>
<div style="left:573px;top:213px;width:1px;height:14px;background:#c0c0c0;"></div>
<div class="t rc" style="left:558px;top:213px;width:15px;line-height:14px;color:#70ac70">0</div>
<div class="t r" style="left:576px;top:213px;line-height:14px;">E1</div>
<div style="left:558px;top:227px;width:39px;height:1px;background:#c0c0c0;"></div>
<div style="left:552px;top:218px;width:5px;height:3px;background:#808080;"></div>
<div style="left:558px;top:228px;width:15px;height:14px;background:#80ff80;"></div>
<div style="left:573px;top:228px;width:1px;height:14px;background:#c0c0c0;"></div>
<div class="t rc" style="left:558px;top:228px;width:15px;line-height:14px;color:#70ac70">0</div>
<div class="t r" style="left:576px;top:228px;line-height:14px;">E2</div>
<div style="left:558px;top:242px;width:39px;height:1px;background:#c0c0c0;"></div>
<div style="left:552px;top:233px;width:5px;height:3px;background:#808080;"></div>
<div style="left:647px;top:213px;width:15px;height:14px;background:#ff8080;"></div>
<div style="left:646px;top:213px;width:1px;height:14px;background:#c0c0c0;"></div>
<div class="t rc" style="left:647px;top:213px;width:15px;line-height:14px;color:#c07070">0</div>
<div class="t r" style="left:600px;top:213px;line-height:14px;">A1</div>
<div style="left:598px;top:227px;width:64px;height:1px;background:#c0c0c0;"></div>
<div style="left:663px;top:218px;width:5px;height:3px;background:#808080;"></div>
<div style="left:647px;top:228px;width:15px;height:14px;background:#ff8080;"></div>
<div style="left:646px;top:228px;width:1px;height:14px;background:#c0c0c0;"></div>
<div class="t rc" style="left:647px;top:228px;width:15px;line-height:14px;color:#c07070">0</div>
<div class="t r" style="left:600px;top:228px;line-height:14px;">A2 (sbc)</div>
<div style="left:663px;top:233px;width:5px;height:3px;background:#808080;"></div>
<div style="left:632px;top:262px;width:111px;height:91px;background:#fff;border:1px solid #808080;box-sizing:border-box;"></div>
<div style="left:633px;top:263px;width:109px;height:29px;background:#c0c0c0;"></div>
<div style="left:633px;top:292px;width:109px;height:1px;background:#808080;"></div>
<div class="t" style="left:635px;top:264px;font-size:11px;line-height:14px;">-Text eingeben-</div>
<div class="t r" style="left:635px;top:278px;line-height:12px;">Kleiner</div>
<svg class="a" style="left:729px;top:267px" width="10" height="10"><path d="M8.5 1.5L1.900 4.6L8.5 7.700" fill="none" stroke="#000" stroke-width="1.800" stroke-linecap="square"/></svg>
<div style="left:666px;top:293px;width:1px;height:59px;background:#808080;"></div>
<div style="left:633px;top:293px;width:15px;height:14px;background:#80ff80;"></div>
<div style="left:648px;top:293px;width:1px;height:14px;background:#c0c0c0;"></div>
<div class="t rc" style="left:633px;top:293px;width:15px;line-height:14px;color:#70ac70">0</div>
<div class="t r" style="left:651px;top:293px;line-height:14px;">E1</div>
<div style="left:633px;top:307px;width:33px;height:1px;background:#c0c0c0;"></div>
<div style="left:627px;top:298px;width:5px;height:3px;background:#808080;"></div>
<div style="left:633px;top:308px;width:15px;height:14px;background:#ffff80;"></div>
<div style="left:648px;top:308px;width:1px;height:14px;background:#c0c0c0;"></div>
<div class="t rc" style="left:633px;top:308px;width:15px;line-height:14px;color:#000">50</div>
<div class="t r" style="left:651px;top:308px;line-height:14px;">E2</div>
<div style="left:633px;top:322px;width:33px;height:1px;background:#c0c0c0;"></div>
<div style="left:627px;top:313px;width:5px;height:3px;background:#808080;"></div>
<div style="left:727px;top:293px;width:15px;height:14px;background:#ff8080;"></div>
<div style="left:726px;top:293px;width:1px;height:14px;background:#c0c0c0;"></div>
<div class="t rc" style="left:727px;top:293px;width:15px;line-height:14px;color:#c07070">0</div>
<div class="t r" style="left:669px;top:293px;line-height:14px;">A1</div>
<div style="left:667px;top:307px;width:75px;height:1px;background:#c0c0c0;"></div>
<div style="left:743px;top:298px;width:5px;height:3px;background:#808080;"></div>
<div style="left:727px;top:308px;width:15px;height:14px;background:#ff8080;"></div>
<div style="left:726px;top:308px;width:1px;height:14px;background:#c0c0c0;"></div>
<div class="t rc" style="left:727px;top:308px;width:15px;line-height:14px;color:#c07070">0</div>
<div class="t r" style="left:669px;top:308px;line-height:14px;">A2 neg</div>
<div style="left:667px;top:322px;width:75px;height:1px;background:#c0c0c0;"></div>
<div style="left:743px;top:313px;width:5px;height:3px;background:#808080;"></div>
<div style="left:727px;top:323px;width:15px;height:14px;background:#ff8080;"></div>
<div style="left:726px;top:323px;width:1px;height:14px;background:#c0c0c0;"></div>
<div class="t rc" style="left:727px;top:323px;width:15px;line-height:14px;color:#c07070">0</div>
<div class="t r" style="left:669px;top:323px;line-height:14px;">A3 (sbc)</div>
<div style="left:667px;top:337px;width:75px;height:1px;background:#c0c0c0;"></div>
<div style="left:743px;top:328px;width:5px;height:3px;background:#808080;"></div>
<div style="left:727px;top:338px;width:15px;height:14px;background:#ff8080;"></div>
<div style="left:726px;top:338px;width:1px;height:14px;background:#c0c0c0;"></div>
<div class="t rc" style="left:727px;top:338px;width:15px;line-height:14px;color:#c07070">0</div>
<div class="t r" style="left:669px;top:338px;line-height:14px;">A3 neg (sbc)</div>
<div style="left:743px;top:343px;width:5px;height:3px;background:#808080;"></div>
<div style="left:632px;top:417px;width:116px;height:91px;background:#fff;border:1px solid #808080;box-sizing:border-box;"></div>
<div style="left:633px;top:418px;width:114px;height:29px;background:#c0c0c0;"></div>
<div style="left:633px;top:447px;width:114px;height:1px;background:#808080;"></div>
<div class="t" style="left:635px;top:419px;font-size:11px;line-height:14px;">-Text eingeben-</div>
<div class="t r" style="left:635px;top:433px;line-height:12px;">Grösser</div>
<svg class="a" style="left:734px;top:422px" width="10" height="10"><path d="M1.5 1.5L8.100 4.6L1.5 7.700" fill="none" stroke="#000" stroke-width="1.800" stroke-linecap="square"/></svg>
<div style="left:671px;top:448px;width:1px;height:59px;background:#808080;"></div>
<div style="left:633px;top:448px;width:20px;height:14px;background:#80ff80;"></div>
<div style="left:653px;top:448px;width:1px;height:14px;background:#c0c0c0;"></div>
<div class="t rc" style="left:633px;top:448px;width:20px;line-height:14px;color:#70ac70">0</div>
<div class="t r" style="left:656px;top:448px;line-height:14px;">E1</div>
<div style="left:633px;top:462px;width:38px;height:1px;background:#c0c0c0;"></div>
<div style="left:627px;top:453px;width:5px;height:3px;background:#808080;"></div>
<div style="left:633px;top:463px;width:20px;height:14px;background:#ffff80;"></div>
<div style="left:653px;top:463px;width:1px;height:14px;background:#c0c0c0;"></div>
<div class="t rc" style="left:633px;top:463px;width:20px;line-height:14px;color:#000">100</div>
<div class="t r" style="left:656px;top:463px;line-height:14px;">E2</div>
<div style="left:633px;top:477px;width:38px;height:1px;background:#c0c0c0;"></div>
<div style="left:627px;top:468px;width:5px;height:3px;background:#808080;"></div>
<div style="left:732px;top:448px;width:15px;height:14px;background:#ff8080;"></div>
<div style="left:731px;top:448px;width:1px;height:14px;background:#c0c0c0;"></div>
<div class="t rc" style="left:732px;top:448px;width:15px;line-height:14px;color:#c07070">0</div>
<div class="t r" style="left:674px;top:448px;line-height:14px;">A1</div>
<div style="left:672px;top:462px;width:75px;height:1px;background:#c0c0c0;"></div>
<div style="left:748px;top:453px;width:5px;height:3px;background:#808080;"></div>
<div style="left:732px;top:463px;width:15px;height:14px;background:#ff8080;"></div>
<div style="left:731px;top:463px;width:1px;height:14px;background:#c0c0c0;"></div>
<div class="t rc" style="left:732px;top:463px;width:15px;line-height:14px;color:#c07070">0</div>
<div class="t r" style="left:674px;top:463px;line-height:14px;">A2 neg</div>
<div style="left:672px;top:477px;width:75px;height:1px;background:#c0c0c0;"></div>
<div style="left:748px;top:468px;width:5px;height:3px;background:#808080;"></div>
<div style="left:732px;top:478px;width:15px;height:14px;background:#ff8080;"></div>
<div style="left:731px;top:478px;width:1px;height:14px;background:#c0c0c0;"></div>
<div class="t rc" style="left:732px;top:478px;width:15px;line-height:14px;color:#c07070">0</div>
<div class="t r" style="left:674px;top:478px;line-height:14px;">A3 (sbc)</div>
<div style="left:672px;top:492px;width:75px;height:1px;background:#c0c0c0;"></div>
<div style="left:748px;top:483px;width:5px;height:3px;background:#808080;"></div>
<div style="left:732px;top:493px;width:15px;height:14px;background:#ff8080;"></div>
<div style="left:731px;top:493px;width:1px;height:14px;background:#c0c0c0;"></div>
<div class="t rc" style="left:732px;top:493px;width:15px;line-height:14px;color:#c07070">0</div>
<div class="t r" style="left:674px;top:493px;line-height:14px;">A4 neg (sbc)</div>
<div style="left:748px;top:498px;width:5px;height:3px;background:#808080;"></div>
<div style="left:872px;top:262px;width:111px;height:91px;background:#fff;border:1px solid #808080;box-sizing:border-box;"></div>
<div style="left:873px;top:263px;width:109px;height:29px;background:#c0c0c0;"></div>
<div style="left:873px;top:292px;width:109px;height:1px;background:#808080;"></div>
<div class="t" style="left:875px;top:264px;font-size:11px;line-height:14px;">-Text eingeben-</div>
<div class="t r" style="left:875px;top:278px;line-height:12px;">UND, 2 Eing</div>
<div class="t" style="left:969px;top:264px;font-size:13.5px;line-height:16px;width:10px;text-align:center;transform:scaleX(.9);-webkit-text-stroke:.1px">&amp;</div>
<div style="left:906px;top:293px;width:1px;height:59px;background:#808080;"></div>
<div style="left:873px;top:293px;width:15px;height:14px;background:#80ff80;"></div>
<div style="left:888px;top:293px;width:1px;height:14px;background:#c0c0c0;"></div>
<div class="t rc" style="left:873px;top:293px;width:15px;line-height:14px;color:#70ac70">1</div>
<div class="t r" style="left:891px;top:293px;line-height:14px;">E1</div>
<div style="left:873px;top:307px;width:33px;height:1px;background:#c0c0c0;"></div>
<div style="left:867px;top:298px;width:5px;height:3px;background:#808080;"></div>
<div style="left:873px;top:308px;width:15px;height:14px;background:#80ff80;"></div>
<div style="left:888px;top:308px;width:1px;height:14px;background:#c0c0c0;"></div>
<div class="t rc" style="left:873px;top:308px;width:15px;line-height:14px;color:#70ac70">1</div>
<div class="t r" style="left:891px;top:308px;line-height:14px;">E2</div>
<div style="left:873px;top:322px;width:33px;height:1px;background:#c0c0c0;"></div>
<div style="left:867px;top:313px;width:5px;height:3px;background:#808080;"></div>
<div style="left:967px;top:293px;width:15px;height:14px;background:#ff8080;"></div>
<div style="left:966px;top:293px;width:1px;height:14px;background:#c0c0c0;"></div>
<div class="t rc" style="left:967px;top:293px;width:15px;line-height:14px;color:#c07070">0</div>
<div class="t r" style="left:909px;top:293px;line-height:14px;">A1</div>
<div style="left:907px;top:307px;width:75px;height:1px;background:#c0c0c0;"></div>
<div style="left:983px;top:298px;width:5px;height:3px;background:#808080;"></div>
<div style="left:967px;top:308px;width:15px;height:14px;background:#ff8080;"></div>
<div style="left:966px;top:308px;width:1px;height:14px;background:#c0c0c0;"></div>
<div class="t rc" style="left:967px;top:308px;width:15px;line-height:14px;color:#c07070">0</div>
<div class="t r" style="left:909px;top:308px;line-height:14px;">A2 neg</div>
<div style="left:907px;top:322px;width:75px;height:1px;background:#c0c0c0;"></div>
<div style="left:983px;top:313px;width:5px;height:3px;background:#808080;"></div>
<div style="left:967px;top:323px;width:15px;height:14px;background:#ff8080;"></div>
<div style="left:966px;top:323px;width:1px;height:14px;background:#c0c0c0;"></div>
<div class="t rc" style="left:967px;top:323px;width:15px;line-height:14px;color:#c07070">0</div>
<div class="t r" style="left:909px;top:323px;line-height:14px;">A3 (sbc)</div>
<div style="left:907px;top:337px;width:75px;height:1px;background:#c0c0c0;"></div>
<div style="left:983px;top:328px;width:5px;height:3px;background:#808080;"></div>
<div style="left:967px;top:338px;width:15px;height:14px;background:#ff8080;"></div>
<div style="left:966px;top:338px;width:1px;height:14px;background:#c0c0c0;"></div>
<div class="t rc" style="left:967px;top:338px;width:15px;line-height:14px;color:#c07070">0</div>
<div class="t r" style="left:909px;top:338px;line-height:14px;">A4 neg (sbc)</div>
<div style="left:983px;top:343px;width:5px;height:3px;background:#808080;"></div>
<div style="left:872px;top:417px;width:111px;height:91px;background:#fff;border:1px solid #808080;box-sizing:border-box;"></div>
<div style="left:873px;top:418px;width:109px;height:29px;background:#c0c0c0;"></div>
<div style="left:873px;top:447px;width:109px;height:1px;background:#808080;"></div>
<div class="t" style="left:875px;top:419px;font-size:11px;line-height:14px;">-Text eingeben-</div>
<div class="t r" style="left:875px;top:433px;line-height:12px;">UND, 2 Eing</div>
<div class="t" style="left:969px;top:419px;font-size:13.5px;line-height:16px;width:10px;text-align:center;transform:scaleX(.9);-webkit-text-stroke:.1px">&amp;</div>
<div style="left:906px;top:448px;width:1px;height:59px;background:#808080;"></div>
<div style="left:873px;top:448px;width:15px;height:14px;background:#80ff80;"></div>
<div style="left:888px;top:448px;width:1px;height:14px;background:#c0c0c0;"></div>
<div class="t rc" style="left:873px;top:448px;width:15px;line-height:14px;color:#70ac70">1</div>
<div class="t r" style="left:891px;top:448px;line-height:14px;">E1</div>
<div style="left:873px;top:462px;width:33px;height:1px;background:#c0c0c0;"></div>
<div style="left:867px;top:453px;width:5px;height:3px;background:#808080;"></div>
<div style="left:873px;top:463px;width:15px;height:14px;background:#80ff80;"></div>
<div style="left:888px;top:463px;width:1px;height:14px;background:#c0c0c0;"></div>
<div class="t rc" style="left:873px;top:463px;width:15px;line-height:14px;color:#70ac70">1</div>
<div class="t r" style="left:891px;top:463px;line-height:14px;">E2</div>
<div style="left:873px;top:477px;width:33px;height:1px;background:#c0c0c0;"></div>
<div style="left:867px;top:468px;width:5px;height:3px;background:#808080;"></div>
<div style="left:967px;top:448px;width:15px;height:14px;background:#ff8080;"></div>
<div style="left:966px;top:448px;width:1px;height:14px;background:#c0c0c0;"></div>
<div class="t rc" style="left:967px;top:448px;width:15px;line-height:14px;color:#c07070">0</div>
<div class="t r" style="left:909px;top:448px;line-height:14px;">A1</div>
<div style="left:907px;top:462px;width:75px;height:1px;background:#c0c0c0;"></div>
<div style="left:983px;top:453px;width:5px;height:3px;background:#808080;"></div>
<div style="left:967px;top:463px;width:15px;height:14px;background:#ff8080;"></div>
<div style="left:966px;top:463px;width:1px;height:14px;background:#c0c0c0;"></div>
<div class="t rc" style="left:967px;top:463px;width:15px;line-height:14px;color:#c07070">0</div>
<div class="t r" style="left:909px;top:463px;line-height:14px;">A2 neg</div>
<div style="left:907px;top:477px;width:75px;height:1px;background:#c0c0c0;"></div>
<div style="left:983px;top:468px;width:5px;height:3px;background:#808080;"></div>
<div style="left:967px;top:478px;width:15px;height:14px;background:#ff8080;"></div>
<div style="left:966px;top:478px;width:1px;height:14px;background:#c0c0c0;"></div>
<div class="t rc" style="left:967px;top:478px;width:15px;line-height:14px;color:#c07070">0</div>
<div class="t r" style="left:909px;top:478px;line-height:14px;">A3 (sbc)</div>
<div style="left:907px;top:492px;width:75px;height:1px;background:#c0c0c0;"></div>
<div style="left:983px;top:483px;width:5px;height:3px;background:#808080;"></div>
<div style="left:967px;top:493px;width:15px;height:14px;background:#ff8080;"></div>
<div style="left:966px;top:493px;width:1px;height:14px;background:#c0c0c0;"></div>
<div class="t rc" style="left:967px;top:493px;width:15px;line-height:14px;color:#c07070">0</div>
<div class="t r" style="left:909px;top:493px;line-height:14px;">A4 neg (sbc)</div>
<div style="left:983px;top:498px;width:5px;height:3px;background:#808080;"></div>
<div style="left:1037px;top:292px;width:111px;height:61px;background:#fff;border:1px solid #808080;box-sizing:border-box;"></div>
<div style="left:1038px;top:293px;width:109px;height:29px;background:#c0c0c0;"></div>
<div style="left:1038px;top:322px;width:109px;height:1px;background:#808080;"></div>
<div class="t" style="left:1040px;top:294px;font-size:10.72px;line-height:14px;">&lt;Text eingeben&gt;</div>
<div class="t r" style="left:1040px;top:308px;line-height:12px;">Binär-Auslöser</div>
<svg class="a" style="left:1133px;top:298px" width="13" height="7" shape-rendering="crispEdges"><path d="M0 0h1v7h-1zM1 3h2v1h-2zM3 4h1v2h-1zM1 6h2v1h-2zM6 0h1v1h-1zM6 3h1v4h-1zM9 3h1v4h-1zM10 3h2v1h-2zM12 4h1v3h-1z" fill="#000"/></svg>
<div style="left:1074px;top:323px;width:1px;height:29px;background:#808080;"></div>
<div style="left:1038px;top:323px;width:15px;height:14px;background:#80ff80;"></div>
<div style="left:1053px;top:323px;width:1px;height:14px;background:#c0c0c0;"></div>
<div class="t rc" style="left:1038px;top:323px;width:15px;line-height:14px;color:#70ac70">0</div>
<div class="t r" style="left:1056px;top:323px;line-height:14px;">E1</div>
<div style="left:1038px;top:337px;width:36px;height:1px;background:#c0c0c0;"></div>
<div style="left:1032px;top:328px;width:5px;height:3px;background:#808080;"></div>
<div style="left:1132px;top:323px;width:15px;height:14px;background:#ff8080;"></div>
<div style="left:1131px;top:323px;width:1px;height:14px;background:#c0c0c0;"></div>
<div class="t rc" style="left:1132px;top:323px;width:15px;line-height:14px;color:#c07070">0</div>
<div class="t r" style="left:1077px;top:323px;line-height:14px;">A1 (E1&lt;&gt;0)</div>
<div style="left:1075px;top:337px;width:72px;height:1px;background:#c0c0c0;"></div>
<div style="left:1148px;top:328px;width:5px;height:3px;background:#808080;"></div>
<div style="left:1132px;top:338px;width:15px;height:14px;background:#ff8080;"></div>
<div style="left:1131px;top:338px;width:1px;height:14px;background:#c0c0c0;"></div>
<div class="t rc" style="left:1132px;top:338px;width:15px;line-height:14px;color:#c07070">0</div>
<div class="t r" style="left:1077px;top:338px;line-height:14px;">A2 (E1=0)</div>
<div style="left:1148px;top:343px;width:5px;height:3px;background:#808080;"></div>
<div style="left:1037px;top:447px;width:111px;height:61px;background:#fff;border:1px solid #808080;box-sizing:border-box;"></div>
<div style="left:1038px;top:448px;width:109px;height:29px;background:#c0c0c0;"></div>
<div style="left:1038px;top:477px;width:109px;height:1px;background:#808080;"></div>
<div class="t" style="left:1040px;top:449px;font-size:10.72px;line-height:14px;">&lt;Text eingeben&gt;</div>
<div class="t r" style="left:1040px;top:463px;line-height:12px;">Binär-Auslöser</div>
<svg class="a" style="left:1133px;top:453px" width="13" height="7" shape-rendering="crispEdges"><path d="M0 0h1v7h-1zM1 3h2v1h-2zM3 4h1v2h-1zM1 6h2v1h-2zM6 0h1v1h-1zM6 3h1v4h-1zM9 3h1v4h-1zM10 3h2v1h-2zM12 4h1v3h-1z" fill="#000"/></svg>
<div style="left:1074px;top:478px;width:1px;height:29px;background:#808080;"></div>
<div style="left:1038px;top:478px;width:15px;height:14px;background:#80ff80;"></div>
<div style="left:1053px;top:478px;width:1px;height:14px;background:#c0c0c0;"></div>
<div class="t rc" style="left:1038px;top:478px;width:15px;line-height:14px;color:#70ac70">0</div>
<div class="t r" style="left:1056px;top:478px;line-height:14px;">E1</div>
<div style="left:1038px;top:492px;width:36px;height:1px;background:#c0c0c0;"></div>
<div style="left:1032px;top:483px;width:5px;height:3px;background:#808080;"></div>
<div style="left:1132px;top:478px;width:15px;height:14px;background:#ff8080;"></div>
<div style="left:1131px;top:478px;width:1px;height:14px;background:#c0c0c0;"></div>
<div class="t rc" style="left:1132px;top:478px;width:15px;line-height:14px;color:#c07070">0</div>
<div class="t r" style="left:1077px;top:478px;line-height:14px;">A1 (E1&lt;&gt;0)</div>
<div style="left:1075px;top:492px;width:72px;height:1px;background:#c0c0c0;"></div>
<div style="left:1148px;top:483px;width:5px;height:3px;background:#808080;"></div>
<div style="left:1132px;top:493px;width:15px;height:14px;background:#ff8080;"></div>
<div style="left:1131px;top:493px;width:1px;height:14px;background:#c0c0c0;"></div>
<div class="t rc" style="left:1132px;top:493px;width:15px;line-height:14px;color:#c07070">0</div>
<div class="t r" style="left:1077px;top:493px;line-height:14px;">A2 (E1=0)</div>
<div style="left:1148px;top:498px;width:5px;height:3px;background:#808080;"></div>
<div style="left:872px;top:517px;width:106px;height:61px;background:#fff;border:1px solid #808080;box-sizing:border-box;"></div>
<div style="left:873px;top:518px;width:104px;height:29px;background:#c0c0c0;"></div>
<div style="left:873px;top:547px;width:104px;height:1px;background:#808080;"></div>
<div class="t" style="left:875px;top:519px;font-size:11px;line-height:14px;">-Text eingeben-</div>
<div class="t r" style="left:875px;top:533px;line-height:12px;">Subtraktion</div>
<svg class="a" style="left:966px;top:525px" width="6" height="2" shape-rendering="crispEdges"><rect width="6" height="2" fill="#000"/></svg>
<div style="left:912px;top:548px;width:1px;height:29px;background:#808080;"></div>
<div style="left:873px;top:548px;width:15px;height:14px;background:#80ff80;"></div>
<div style="left:888px;top:548px;width:1px;height:14px;background:#c0c0c0;"></div>
<div class="t rc" style="left:873px;top:548px;width:15px;line-height:14px;color:#70ac70">0</div>
<div class="t r" style="left:891px;top:548px;line-height:14px;">E1</div>
<div style="left:873px;top:562px;width:39px;height:1px;background:#c0c0c0;"></div>
<div style="left:867px;top:553px;width:5px;height:3px;background:#808080;"></div>
<div style="left:873px;top:563px;width:15px;height:14px;background:#ffff80;"></div>
<div style="left:888px;top:563px;width:1px;height:14px;background:#c0c0c0;"></div>
<div class="t rc" style="left:873px;top:563px;width:15px;line-height:14px;color:#000">75</div>
<div class="t r" style="left:891px;top:563px;line-height:14px;">E2</div>
<div style="left:873px;top:577px;width:39px;height:1px;background:#c0c0c0;"></div>
<div style="left:867px;top:568px;width:5px;height:3px;background:#808080;"></div>
<div style="left:962px;top:548px;width:15px;height:14px;background:#ff8080;"></div>
<div style="left:961px;top:548px;width:1px;height:14px;background:#c0c0c0;"></div>
<div class="t rc" style="left:962px;top:548px;width:15px;line-height:14px;color:#c07070">0</div>
<div class="t r" style="left:915px;top:548px;line-height:14px;">A1</div>
<div style="left:913px;top:562px;width:64px;height:1px;background:#c0c0c0;"></div>
<div style="left:978px;top:553px;width:5px;height:3px;background:#808080;"></div>
<div style="left:962px;top:563px;width:15px;height:14px;background:#ff8080;"></div>
<div style="left:961px;top:563px;width:1px;height:14px;background:#c0c0c0;"></div>
<div class="t rc" style="left:962px;top:563px;width:15px;line-height:14px;color:#c07070">0</div>
<div class="t r" style="left:915px;top:563px;line-height:14px;">A2 (sbc)</div>
<div style="left:978px;top:568px;width:5px;height:3px;background:#808080;"></div>
<div style="left:1037px;top:517px;width:106px;height:76px;background:#fff;border:1px solid #808080;box-sizing:border-box;"></div>
<div style="left:1038px;top:518px;width:104px;height:29px;background:#c0c0c0;"></div>
<div style="left:1038px;top:547px;width:104px;height:1px;background:#808080;"></div>
<div class="t" style="left:1040px;top:519px;font-size:11px;line-height:14px;">-Text eingeben-</div>
<div class="t r" style="left:1040px;top:533px;line-height:12px;">Division</div>
<svg class="a" style="left:1129px;top:522px" width="10" height="10" shape-rendering="crispEdges"><rect y="4" width="10" height="2" fill="#000"/><rect x="4" y="0" width="2" height="2" fill="#000"/><rect x="4" y="8" width="2" height="2" fill="#000"/></svg>
<div style="left:1080px;top:548px;width:1px;height:44px;background:#808080;"></div>
<div style="left:1038px;top:548px;width:20px;height:14px;background:#80ff80;"></div>
<div style="left:1058px;top:548px;width:1px;height:14px;background:#c0c0c0;"></div>
<div class="t rc" style="left:1038px;top:548px;width:20px;line-height:14px;color:#70ac70">0</div>
<div class="t r" style="left:1061px;top:548px;line-height:14px;">E1</div>
<div style="left:1038px;top:562px;width:42px;height:1px;background:#c0c0c0;"></div>
<div style="left:1032px;top:553px;width:5px;height:3px;background:#808080;"></div>
<div style="left:1038px;top:563px;width:20px;height:14px;background:#ffff80;"></div>
<div style="left:1058px;top:563px;width:1px;height:14px;background:#c0c0c0;"></div>
<div class="t rc" style="left:1038px;top:563px;width:20px;line-height:14px;color:#000">100</div>
<div class="t r" style="left:1061px;top:563px;line-height:14px;">E2</div>
<div style="left:1038px;top:577px;width:42px;height:1px;background:#c0c0c0;"></div>
<div style="left:1032px;top:568px;width:5px;height:3px;background:#808080;"></div>
<div style="left:1127px;top:548px;width:15px;height:14px;background:#ff8080;"></div>
<div style="left:1126px;top:548px;width:1px;height:14px;background:#c0c0c0;"></div>
<div class="t rc" style="left:1127px;top:548px;width:15px;line-height:14px;color:#c07070">0</div>
<div class="t r" style="left:1083px;top:548px;line-height:14px;">A1</div>
<div style="left:1081px;top:562px;width:61px;height:1px;background:#c0c0c0;"></div>
<div style="left:1143px;top:553px;width:5px;height:3px;background:#808080;"></div>
<div style="left:1127px;top:563px;width:15px;height:14px;background:#ff8080;"></div>
<div style="left:1126px;top:563px;width:1px;height:14px;background:#c0c0c0;"></div>
<div class="t rc" style="left:1127px;top:563px;width:15px;line-height:14px;color:#c07070">0</div>
<div class="t r" style="left:1083px;top:563px;line-height:14px;">A2 (sbc)</div>
<div style="left:1081px;top:577px;width:61px;height:1px;background:#c0c0c0;"></div>
<div style="left:1143px;top:568px;width:5px;height:3px;background:#808080;"></div>
<div style="left:1127px;top:578px;width:15px;height:14px;background:#ff8080;"></div>
<div style="left:1126px;top:578px;width:1px;height:14px;background:#c0c0c0;"></div>
<div class="t rc" style="left:1127px;top:578px;width:15px;line-height:14px;color:#c07070">0</div>
<div class="t r" style="left:1083px;top:578px;line-height:14px;">Fehler</div>
<div style="left:1143px;top:583px;width:5px;height:3px;background:#808080;"></div>
<div style="left:872px;top:587px;width:106px;height:61px;background:#fff;border:1px solid #808080;box-sizing:border-box;"></div>
<div style="left:873px;top:588px;width:104px;height:29px;background:#c0c0c0;"></div>
<div style="left:873px;top:617px;width:104px;height:1px;background:#808080;"></div>
<div class="t" style="left:875px;top:589px;font-size:11px;line-height:14px;">-Text eingeben-</div>
<div class="t r" style="left:875px;top:603px;line-height:12px;">Addition</div>
<svg class="a" style="left:964px;top:591px" width="10" height="10" shape-rendering="crispEdges"><rect x="0" y="4" width="10" height="2" fill="#000"/><rect x="4" y="0" width="2" height="10" fill="#000"/></svg>
<div style="left:912px;top:618px;width:1px;height:29px;background:#808080;"></div>
<div style="left:873px;top:618px;width:15px;height:14px;background:#80ff80;"></div>
<div style="left:888px;top:618px;width:1px;height:14px;background:#c0c0c0;"></div>
<div class="t rc" style="left:873px;top:618px;width:15px;line-height:14px;color:#70ac70">0</div>
<div class="t r" style="left:891px;top:618px;line-height:14px;">E1</div>
<div style="left:873px;top:632px;width:39px;height:1px;background:#c0c0c0;"></div>
<div style="left:867px;top:623px;width:5px;height:3px;background:#808080;"></div>
<div style="left:873px;top:633px;width:15px;height:14px;background:#80ff80;"></div>
<div style="left:888px;top:633px;width:1px;height:14px;background:#c0c0c0;"></div>
<div class="t rc" style="left:873px;top:633px;width:15px;line-height:14px;color:#70ac70">0</div>
<div class="t r" style="left:891px;top:633px;line-height:14px;">E2</div>
<div style="left:873px;top:647px;width:39px;height:1px;background:#c0c0c0;"></div>
<div style="left:867px;top:638px;width:5px;height:3px;background:#808080;"></div>
<div style="left:962px;top:618px;width:15px;height:14px;background:#ff8080;"></div>
<div style="left:961px;top:618px;width:1px;height:14px;background:#c0c0c0;"></div>
<div class="t rc" style="left:962px;top:618px;width:15px;line-height:14px;color:#c07070">0</div>
<div class="t r" style="left:915px;top:618px;line-height:14px;">A1</div>
<div style="left:913px;top:632px;width:64px;height:1px;background:#c0c0c0;"></div>
<div style="left:978px;top:623px;width:5px;height:3px;background:#808080;"></div>
<div style="left:962px;top:633px;width:15px;height:14px;background:#ff8080;"></div>
<div style="left:961px;top:633px;width:1px;height:14px;background:#c0c0c0;"></div>
<div class="t rc" style="left:962px;top:633px;width:15px;line-height:14px;color:#c07070">0</div>
<div class="t r" style="left:915px;top:633px;line-height:14px;">A2 (sbc)</div>
<div style="left:978px;top:638px;width:5px;height:3px;background:#808080;"></div>
<div style="left:347px;top:627px;width:181px;height:86px;background:#fff;border:1px solid #808080;box-sizing:border-box;"></div>
<div style="left:348px;top:628px;width:179px;height:29px;background:#c0c0c0;"></div>
<div style="left:348px;top:657px;width:179px;height:1px;background:#808080;"></div>
<div class="t" style="left:350px;top:629px;font-size:11px;line-height:14px;">-Text eingeben-</div>
<div class="t r" style="left:350px;top:643px;line-height:12px;">Oszillator</div>
<svg class="a" style="left:512px;top:629px" width="13" height="13" shape-rendering="crispEdges"><path d="M0 4h1v1h-1zM1 0h1v5h-1zM1 0h6v1h-6zM6 0h1v5h-1zM6 4h6v1h-6zM11 0h1v5h-1zM12 0h1v1h-1zM7 7h1v6h-1zM6 8h4v1h-4zM7 12h4v1h-4z" fill="#000"/></svg>
<div style="left:439px;top:658px;width:1px;height:54px;background:#808080;"></div>
<div style="left:348px;top:658px;width:15px;height:14px;background:#ffff80;"></div>
<div style="left:363px;top:658px;width:1px;height:14px;background:#c0c0c0;"></div>
<div class="t rc" style="left:348px;top:658px;width:15px;line-height:14px;color:#000">1</div>
<div class="t r" style="left:366px;top:658px;line-height:14px;">E1 Pw (Sek.)</div>
<div style="left:348px;top:672px;width:91px;height:1px;background:#c0c0c0;"></div>
<div style="left:342px;top:663px;width:5px;height:3px;background:#808080;"></div>
<div style="left:348px;top:673px;width:15px;height:14px;background:#ffff80;"></div>
<div style="left:363px;top:673px;width:1px;height:14px;background:#c0c0c0;"></div>
<div class="t rc" style="left:348px;top:673px;width:15px;line-height:14px;color:#000">5</div>
<div class="t r" style="left:366px;top:673px;line-height:14px;">E2 Zyklus (Sek.)</div>
<div style="left:348px;top:687px;width:91px;height:1px;background:#c0c0c0;"></div>
<div style="left:342px;top:678px;width:5px;height:3px;background:#808080;"></div>
<div style="left:348px;top:688px;width:15px;height:14px;background:#ffff80;"></div>
<div style="left:363px;top:688px;width:1px;height:14px;background:#c0c0c0;"></div>
<div class="t rc" style="left:348px;top:688px;width:15px;line-height:14px;color:#000">1</div>
<div class="t r" style="left:366px;top:688px;line-height:14px;">E3 Ein/Aus</div>
<div style="left:348px;top:702px;width:91px;height:1px;background:#c0c0c0;"></div>
<div style="left:342px;top:693px;width:5px;height:3px;background:#808080;"></div>
<div style="left:512px;top:658px;width:15px;height:24px;background:#ff8080;"></div>
<div style="left:511px;top:658px;width:1px;height:24px;background:#c0c0c0;"></div>
<div class="t rc" style="left:512px;top:658px;width:15px;line-height:24px;color:#c07070">0</div>
<div class="t r" style="left:442px;top:658px;line-height:24px;">A1 (sbc)</div>
<div style="left:440px;top:682px;width:87px;height:1px;background:#c0c0c0;"></div>
<div style="left:528px;top:663px;width:5px;height:3px;background:#808080;"></div>
<div style="left:528px;top:673px;width:5px;height:3px;background:#808080;"></div>
<div style="left:512px;top:683px;width:15px;height:14px;background:#ff8080;"></div>
<div style="left:511px;top:683px;width:1px;height:14px;background:#c0c0c0;"></div>
<div class="t rc" style="left:512px;top:683px;width:15px;line-height:14px;color:#c07070">0</div>
<div class="t r" style="left:442px;top:683px;line-height:14px;">A2 fallend (sbc)</div>
<div style="left:440px;top:697px;width:87px;height:1px;background:#c0c0c0;"></div>
<div style="left:528px;top:688px;width:5px;height:3px;background:#808080;"></div>
<div style="left:512px;top:698px;width:15px;height:14px;background:#ff8080;"></div>
<div style="left:511px;top:698px;width:1px;height:14px;background:#c0c0c0;"></div>
<div class="t rc" style="left:512px;top:698px;width:15px;line-height:14px;color:#c07070">0</div>
<div class="t r" style="left:442px;top:698px;line-height:14px;">A3 (sbc)</div>
<div style="left:528px;top:703px;width:5px;height:3px;background:#808080;"></div>
<div style="left:347px;top:732px;width:181px;height:86px;background:#fff;border:1px solid #808080;box-sizing:border-box;"></div>
<div style="left:348px;top:733px;width:179px;height:29px;background:#c0c0c0;"></div>
<div style="left:348px;top:762px;width:179px;height:1px;background:#808080;"></div>
<div class="t" style="left:350px;top:734px;font-size:11px;line-height:14px;">-Text eingeben-</div>
<div class="t r" style="left:350px;top:748px;line-height:12px;">Oszillator</div>
<svg class="a" style="left:512px;top:734px" width="13" height="13" shape-rendering="crispEdges"><path d="M0 4h1v1h-1zM1 0h1v5h-1zM1 0h6v1h-6zM6 0h1v5h-1zM6 4h6v1h-6zM11 0h1v5h-1zM12 0h1v1h-1zM7 7h1v6h-1zM6 8h4v1h-4zM7 12h4v1h-4z" fill="#000"/></svg>
<div style="left:439px;top:763px;width:1px;height:54px;background:#808080;"></div>
<div style="left:348px;top:763px;width:15px;height:14px;background:#ffff80;"></div>
<div style="left:363px;top:763px;width:1px;height:14px;background:#c0c0c0;"></div>
<div class="t rc" style="left:348px;top:763px;width:15px;line-height:14px;color:#000">1</div>
<div class="t r" style="left:366px;top:763px;line-height:14px;">E1 Pw (Sek.)</div>
<div style="left:348px;top:777px;width:91px;height:1px;background:#c0c0c0;"></div>
<div style="left:342px;top:768px;width:5px;height:3px;background:#808080;"></div>
<div style="left:348px;top:778px;width:15px;height:14px;background:#ffff80;"></div>
<div style="left:363px;top:778px;width:1px;height:14px;background:#c0c0c0;"></div>
<div class="t rc" style="left:348px;top:778px;width:15px;line-height:14px;color:#000">60</div>
<div class="t r" style="left:366px;top:778px;line-height:14px;">E2 Zyklus (Sek.)</div>
<div style="left:348px;top:792px;width:91px;height:1px;background:#c0c0c0;"></div>
<div style="left:342px;top:783px;width:5px;height:3px;background:#808080;"></div>
<div style="left:348px;top:793px;width:15px;height:14px;background:#ffff80;"></div>
<div style="left:363px;top:793px;width:1px;height:14px;background:#c0c0c0;"></div>
<div class="t rc" style="left:348px;top:793px;width:15px;line-height:14px;color:#000">1</div>
<div class="t r" style="left:366px;top:793px;line-height:14px;">E3 Ein/Aus</div>
<div style="left:348px;top:807px;width:91px;height:1px;background:#c0c0c0;"></div>
<div style="left:342px;top:798px;width:5px;height:3px;background:#808080;"></div>
<div style="left:512px;top:763px;width:15px;height:24px;background:#ff8080;"></div>
<div style="left:511px;top:763px;width:1px;height:24px;background:#c0c0c0;"></div>
<div class="t rc" style="left:512px;top:763px;width:15px;line-height:24px;color:#c07070">0</div>
<div class="t r" style="left:442px;top:763px;line-height:24px;">A1 (sbc)</div>
<div style="left:440px;top:787px;width:87px;height:1px;background:#c0c0c0;"></div>
<div style="left:528px;top:768px;width:5px;height:3px;background:#808080;"></div>
<div style="left:528px;top:778px;width:5px;height:3px;background:#808080;"></div>
<div style="left:512px;top:788px;width:15px;height:14px;background:#ff8080;"></div>
<div style="left:511px;top:788px;width:1px;height:14px;background:#c0c0c0;"></div>
<div class="t rc" style="left:512px;top:788px;width:15px;line-height:14px;color:#c07070">0</div>
<div class="t r" style="left:442px;top:788px;line-height:14px;">A2 fallend (sbc)</div>
<div style="left:440px;top:802px;width:87px;height:1px;background:#c0c0c0;"></div>
<div style="left:528px;top:793px;width:5px;height:3px;background:#808080;"></div>
<div style="left:512px;top:803px;width:15px;height:14px;background:#ff8080;"></div>
<div style="left:511px;top:803px;width:1px;height:14px;background:#c0c0c0;"></div>
<div class="t rc" style="left:512px;top:803px;width:15px;line-height:14px;color:#c07070">0</div>
<div class="t r" style="left:442px;top:803px;line-height:14px;">A3 (sbc)</div>
<div style="left:528px;top:808px;width:5px;height:3px;background:#808080;"></div>
<div style="left:632px;top:637px;width:111px;height:91px;background:#fff;border:1px solid #808080;box-sizing:border-box;"></div>
<div style="left:633px;top:638px;width:109px;height:29px;background:#c0c0c0;"></div>
<div style="left:633px;top:667px;width:109px;height:1px;background:#808080;"></div>
<div class="t" style="left:635px;top:639px;font-size:10.67px;line-height:14px;">Falls Regler 0%</div>
<div class="t r" style="left:635px;top:653px;line-height:12px;">Gleich</div>
<svg class="a" style="left:730px;top:643px" width="9" height="6" shape-rendering="crispEdges"><rect width="9" height="2" fill="#000"/><rect y="4" width="9" height="2" fill="#000"/></svg>
<div style="left:666px;top:668px;width:1px;height:59px;background:#808080;"></div>
<div style="left:633px;top:668px;width:15px;height:14px;background:#80ff80;"></div>
<div style="left:648px;top:668px;width:1px;height:14px;background:#c0c0c0;"></div>
<div class="t rc" style="left:633px;top:668px;width:15px;line-height:14px;color:#70ac70">0</div>
<div class="t r" style="left:651px;top:668px;line-height:14px;">E1</div>
<div style="left:633px;top:682px;width:33px;height:1px;background:#c0c0c0;"></div>
<div style="left:627px;top:673px;width:5px;height:3px;background:#808080;"></div>
<div style="left:633px;top:683px;width:15px;height:14px;background:#ffff80;"></div>
<div style="left:648px;top:683px;width:1px;height:14px;background:#c0c0c0;"></div>
<div class="t rc" style="left:633px;top:683px;width:15px;line-height:14px;color:#000">0</div>
<div class="t r" style="left:651px;top:683px;line-height:14px;">E2</div>
<div style="left:633px;top:697px;width:33px;height:1px;background:#c0c0c0;"></div>
<div style="left:627px;top:688px;width:5px;height:3px;background:#808080;"></div>
<div style="left:727px;top:668px;width:15px;height:14px;background:#ff8080;"></div>
<div style="left:726px;top:668px;width:1px;height:14px;background:#c0c0c0;"></div>
<div class="t rc" style="left:727px;top:668px;width:15px;line-height:14px;color:#c07070">0</div>
<div class="t r" style="left:669px;top:668px;line-height:14px;">A1</div>
<div style="left:667px;top:682px;width:75px;height:1px;background:#c0c0c0;"></div>
<div style="left:743px;top:673px;width:5px;height:3px;background:#808080;"></div>
<div style="left:727px;top:683px;width:15px;height:14px;background:#ff8080;"></div>
<div style="left:726px;top:683px;width:1px;height:14px;background:#c0c0c0;"></div>
<div class="t rc" style="left:727px;top:683px;width:15px;line-height:14px;color:#c07070">0</div>
<div class="t r" style="left:669px;top:683px;line-height:14px;">A2 neg</div>
<div style="left:667px;top:697px;width:75px;height:1px;background:#c0c0c0;"></div>
<div style="left:743px;top:688px;width:5px;height:3px;background:#808080;"></div>
<div style="left:727px;top:698px;width:15px;height:14px;background:#ff8080;"></div>
<div style="left:726px;top:698px;width:1px;height:14px;background:#c0c0c0;"></div>
<div class="t rc" style="left:727px;top:698px;width:15px;line-height:14px;color:#c07070">0</div>
<div class="t r" style="left:669px;top:698px;line-height:14px;">A3 (sbc)</div>
<div style="left:667px;top:712px;width:75px;height:1px;background:#c0c0c0;"></div>
<div style="left:743px;top:703px;width:5px;height:3px;background:#808080;"></div>
<div style="left:727px;top:713px;width:15px;height:14px;background:#ff8080;"></div>
<div style="left:726px;top:713px;width:1px;height:14px;background:#c0c0c0;"></div>
<div class="t rc" style="left:727px;top:713px;width:15px;line-height:14px;color:#c07070">0</div>
<div class="t r" style="left:669px;top:713px;line-height:14px;">A4 neg (sbc)</div>
<div style="left:743px;top:718px;width:5px;height:3px;background:#808080;"></div>
<div style="left:632px;top:727px;width:116px;height:91px;background:#fff;border:1px solid #808080;box-sizing:border-box;"></div>
<div style="left:633px;top:728px;width:114px;height:29px;background:#c0c0c0;"></div>
<div style="left:633px;top:757px;width:114px;height:1px;background:#808080;"></div>
<div class="t" style="left:635px;top:729px;font-size:10.67px;line-height:14px;">Einspeisung &lt; 0</div>
<div class="t r" style="left:635px;top:743px;line-height:12px;">Kleiner</div>
<svg class="a" style="left:734px;top:732px" width="10" height="10"><path d="M8.5 1.5L1.900 4.6L8.5 7.700" fill="none" stroke="#000" stroke-width="1.800" stroke-linecap="square"/></svg>
<div style="left:672px;top:758px;width:1px;height:59px;background:#808080;"></div>
<div style="left:633px;top:758px;width:23px;height:14px;background:#80ff80;"></div>
<div style="left:656px;top:758px;width:1px;height:14px;background:#c0c0c0;"></div>
<div class="t rc" style="left:633px;top:758px;width:23px;line-height:14px;color:#70ac70">0</div>
<div class="t r" style="left:659px;top:758px;line-height:14px;">E1</div>
<div style="left:633px;top:772px;width:39px;height:1px;background:#c0c0c0;"></div>
<div style="left:627px;top:763px;width:5px;height:3px;background:#808080;"></div>
<div style="left:633px;top:773px;width:23px;height:14px;background:#ffff80;"></div>
<div style="left:656px;top:773px;width:1px;height:14px;background:#c0c0c0;"></div>
<div class="t rc" style="left:633px;top:773px;width:23px;line-height:14px;color:#000">-100</div>
<div class="t r" style="left:659px;top:773px;line-height:14px;">E2</div>
<div style="left:633px;top:787px;width:39px;height:1px;background:#c0c0c0;"></div>
<div style="left:627px;top:778px;width:5px;height:3px;background:#808080;"></div>
<div style="left:732px;top:758px;width:15px;height:14px;background:#ff8080;"></div>
<div style="left:731px;top:758px;width:1px;height:14px;background:#c0c0c0;"></div>
<div class="t rc" style="left:732px;top:758px;width:15px;line-height:14px;color:#c07070">0</div>
<div class="t r" style="left:675px;top:758px;line-height:14px;">A1</div>
<div style="left:673px;top:772px;width:74px;height:1px;background:#c0c0c0;"></div>
<div style="left:748px;top:763px;width:5px;height:3px;background:#808080;"></div>
<div style="left:732px;top:773px;width:15px;height:14px;background:#ff8080;"></div>
<div style="left:731px;top:773px;width:1px;height:14px;background:#c0c0c0;"></div>
<div class="t rc" style="left:732px;top:773px;width:15px;line-height:14px;color:#c07070">0</div>
<div class="t r" style="left:675px;top:773px;line-height:14px;">A2 neg</div>
<div style="left:673px;top:787px;width:74px;height:1px;background:#c0c0c0;"></div>
<div style="left:748px;top:778px;width:5px;height:3px;background:#808080;"></div>
<div style="left:732px;top:788px;width:15px;height:14px;background:#ff8080;"></div>
<div style="left:731px;top:788px;width:1px;height:14px;background:#c0c0c0;"></div>
<div class="t rc" style="left:732px;top:788px;width:15px;line-height:14px;color:#c07070">0</div>
<div class="t r" style="left:675px;top:788px;line-height:14px;">A3 (sbc)</div>
<div style="left:673px;top:802px;width:74px;height:1px;background:#c0c0c0;"></div>
<div style="left:748px;top:793px;width:5px;height:3px;background:#808080;"></div>
<div style="left:732px;top:803px;width:15px;height:14px;background:#ff8080;"></div>
<div style="left:731px;top:803px;width:1px;height:14px;background:#c0c0c0;"></div>
<div class="t rc" style="left:732px;top:803px;width:15px;line-height:14px;color:#c07070">0</div>
<div class="t r" style="left:675px;top:803px;line-height:14px;">A3 neg (sbc)</div>
<div style="left:748px;top:808px;width:5px;height:3px;background:#808080;"></div>
<div style="left:867px;top:712px;width:111px;height:91px;background:#fff;border:1px solid #808080;box-sizing:border-box;"></div>
<div style="left:868px;top:713px;width:109px;height:29px;background:#c0c0c0;"></div>
<div style="left:868px;top:742px;width:109px;height:1px;background:#808080;"></div>
<div class="t" style="left:870px;top:714px;font-size:11px;line-height:14px;">-Text eingeben-</div>
<div class="t r" style="left:870px;top:728px;line-height:12px;">UND, 4 Eing</div>
<div class="t" style="left:964px;top:714px;font-size:13.5px;line-height:16px;width:10px;text-align:center;transform:scaleX(.9);-webkit-text-stroke:.1px">&amp;</div>
<div style="left:901px;top:743px;width:1px;height:59px;background:#808080;"></div>
<div style="left:868px;top:743px;width:15px;height:14px;background:#80ff80;"></div>
<div style="left:883px;top:743px;width:1px;height:14px;background:#c0c0c0;"></div>
<div class="t rc" style="left:868px;top:743px;width:15px;line-height:14px;color:#70ac70">1</div>
<div class="t r" style="left:886px;top:743px;line-height:14px;">E1</div>
<div style="left:868px;top:757px;width:33px;height:1px;background:#c0c0c0;"></div>
<div style="left:862px;top:748px;width:5px;height:3px;background:#808080;"></div>
<div style="left:868px;top:758px;width:15px;height:14px;background:#80ff80;"></div>
<div style="left:883px;top:758px;width:1px;height:14px;background:#c0c0c0;"></div>
<div class="t rc" style="left:868px;top:758px;width:15px;line-height:14px;color:#70ac70">1</div>
<div class="t r" style="left:886px;top:758px;line-height:14px;">E2</div>
<div style="left:868px;top:772px;width:33px;height:1px;background:#c0c0c0;"></div>
<div style="left:862px;top:763px;width:5px;height:3px;background:#808080;"></div>
<div style="left:868px;top:773px;width:15px;height:14px;background:#80ff80;"></div>
<div style="left:883px;top:773px;width:1px;height:14px;background:#c0c0c0;"></div>
<div class="t rc" style="left:868px;top:773px;width:15px;line-height:14px;color:#70ac70">1</div>
<div class="t r" style="left:886px;top:773px;line-height:14px;">E3</div>
<div style="left:868px;top:787px;width:33px;height:1px;background:#c0c0c0;"></div>
<div style="left:862px;top:778px;width:5px;height:3px;background:#808080;"></div>
<div style="left:868px;top:788px;width:15px;height:14px;background:#80ff80;"></div>
<div style="left:883px;top:788px;width:1px;height:14px;background:#c0c0c0;"></div>
<div class="t rc" style="left:868px;top:788px;width:15px;line-height:14px;color:#70ac70">1</div>
<div class="t r" style="left:886px;top:788px;line-height:14px;">E4</div>
<div style="left:868px;top:802px;width:33px;height:1px;background:#c0c0c0;"></div>
<div style="left:862px;top:793px;width:5px;height:3px;background:#808080;"></div>
<div style="left:962px;top:743px;width:15px;height:14px;background:#ff8080;"></div>
<div style="left:961px;top:743px;width:1px;height:14px;background:#c0c0c0;"></div>
<div class="t rc" style="left:962px;top:743px;width:15px;line-height:14px;color:#c07070">0</div>
<div class="t r" style="left:904px;top:743px;line-height:14px;">A1</div>
<div style="left:902px;top:757px;width:75px;height:1px;background:#c0c0c0;"></div>
<div style="left:978px;top:748px;width:5px;height:3px;background:#808080;"></div>
<div style="left:962px;top:758px;width:15px;height:14px;background:#ff8080;"></div>
<div style="left:961px;top:758px;width:1px;height:14px;background:#c0c0c0;"></div>
<div class="t rc" style="left:962px;top:758px;width:15px;line-height:14px;color:#c07070">0</div>
<div class="t r" style="left:904px;top:758px;line-height:14px;">A2 neg</div>
<div style="left:902px;top:772px;width:75px;height:1px;background:#c0c0c0;"></div>
<div style="left:978px;top:763px;width:5px;height:3px;background:#808080;"></div>
<div style="left:962px;top:773px;width:15px;height:14px;background:#ff8080;"></div>
<div style="left:961px;top:773px;width:1px;height:14px;background:#c0c0c0;"></div>
<div class="t rc" style="left:962px;top:773px;width:15px;line-height:14px;color:#c07070">0</div>
<div class="t r" style="left:904px;top:773px;line-height:14px;">A3 (sbc)</div>
<div style="left:902px;top:787px;width:75px;height:1px;background:#c0c0c0;"></div>
<div style="left:978px;top:778px;width:5px;height:3px;background:#808080;"></div>
<div style="left:962px;top:788px;width:15px;height:14px;background:#ff8080;"></div>
<div style="left:961px;top:788px;width:1px;height:14px;background:#c0c0c0;"></div>
<div class="t rc" style="left:962px;top:788px;width:15px;line-height:14px;color:#c07070">0</div>
<div class="t r" style="left:904px;top:788px;line-height:14px;">A4 neg (sbc)</div>
<div style="left:978px;top:793px;width:5px;height:3px;background:#808080;"></div>
<div style="left:867px;top:812px;width:111px;height:91px;background:#fff;border:1px solid #808080;box-sizing:border-box;"></div>
<div style="left:868px;top:813px;width:109px;height:29px;background:#c0c0c0;"></div>
<div style="left:868px;top:842px;width:109px;height:1px;background:#808080;"></div>
<div class="t" style="left:870px;top:814px;font-size:11px;line-height:14px;">-Text eingeben-</div>
<div class="t r" style="left:870px;top:828px;line-height:12px;">UND, 4 Eing</div>
<div class="t" style="left:964px;top:814px;font-size:13.5px;line-height:16px;width:10px;text-align:center;transform:scaleX(.9);-webkit-text-stroke:.1px">&amp;</div>
<div style="left:901px;top:843px;width:1px;height:59px;background:#808080;"></div>
<div style="left:868px;top:843px;width:15px;height:14px;background:#80ff80;"></div>
<div style="left:883px;top:843px;width:1px;height:14px;background:#c0c0c0;"></div>
<div class="t rc" style="left:868px;top:843px;width:15px;line-height:14px;color:#70ac70">1</div>
<div class="t r" style="left:886px;top:843px;line-height:14px;">E1</div>
<div style="left:868px;top:857px;width:33px;height:1px;background:#c0c0c0;"></div>
<div style="left:862px;top:848px;width:5px;height:3px;background:#808080;"></div>
<div style="left:868px;top:858px;width:15px;height:14px;background:#80ff80;"></div>
<div style="left:883px;top:858px;width:1px;height:14px;background:#c0c0c0;"></div>
<div class="t rc" style="left:868px;top:858px;width:15px;line-height:14px;color:#70ac70">1</div>
<div class="t r" style="left:886px;top:858px;line-height:14px;">E2</div>
<div style="left:868px;top:872px;width:33px;height:1px;background:#c0c0c0;"></div>
<div style="left:862px;top:863px;width:5px;height:3px;background:#808080;"></div>
<div style="left:868px;top:873px;width:15px;height:14px;background:#80ff80;"></div>
<div style="left:883px;top:873px;width:1px;height:14px;background:#c0c0c0;"></div>
<div class="t rc" style="left:868px;top:873px;width:15px;line-height:14px;color:#70ac70">1</div>
<div class="t r" style="left:886px;top:873px;line-height:14px;">E3</div>
<div style="left:868px;top:887px;width:33px;height:1px;background:#c0c0c0;"></div>
<div style="left:862px;top:878px;width:5px;height:3px;background:#808080;"></div>
<div style="left:868px;top:888px;width:15px;height:14px;background:#80ff80;"></div>
<div style="left:883px;top:888px;width:1px;height:14px;background:#c0c0c0;"></div>
<div class="t rc" style="left:868px;top:888px;width:15px;line-height:14px;color:#70ac70">1</div>
<div class="t r" style="left:886px;top:888px;line-height:14px;">E4</div>
<div style="left:868px;top:902px;width:33px;height:1px;background:#c0c0c0;"></div>
<div style="left:862px;top:893px;width:5px;height:3px;background:#808080;"></div>
<div style="left:962px;top:843px;width:15px;height:14px;background:#ff8080;"></div>
<div style="left:961px;top:843px;width:1px;height:14px;background:#c0c0c0;"></div>
<div class="t rc" style="left:962px;top:843px;width:15px;line-height:14px;color:#c07070">0</div>
<div class="t r" style="left:904px;top:843px;line-height:14px;">A1</div>
<div style="left:902px;top:857px;width:75px;height:1px;background:#c0c0c0;"></div>
<div style="left:978px;top:848px;width:5px;height:3px;background:#808080;"></div>
<div style="left:962px;top:858px;width:15px;height:14px;background:#ff8080;"></div>
<div style="left:961px;top:858px;width:1px;height:14px;background:#c0c0c0;"></div>
<div class="t rc" style="left:962px;top:858px;width:15px;line-height:14px;color:#c07070">0</div>
<div class="t r" style="left:904px;top:858px;line-height:14px;">A2 neg</div>
<div style="left:902px;top:872px;width:75px;height:1px;background:#c0c0c0;"></div>
<div style="left:978px;top:863px;width:5px;height:3px;background:#808080;"></div>
<div style="left:962px;top:873px;width:15px;height:14px;background:#ff8080;"></div>
<div style="left:961px;top:873px;width:1px;height:14px;background:#c0c0c0;"></div>
<div class="t rc" style="left:962px;top:873px;width:15px;line-height:14px;color:#c07070">0</div>
<div class="t r" style="left:904px;top:873px;line-height:14px;">A3 (sbc)</div>
<div style="left:902px;top:887px;width:75px;height:1px;background:#c0c0c0;"></div>
<div style="left:978px;top:878px;width:5px;height:3px;background:#808080;"></div>
<div style="left:962px;top:888px;width:15px;height:14px;background:#ff8080;"></div>
<div style="left:961px;top:888px;width:1px;height:14px;background:#c0c0c0;"></div>
<div class="t rc" style="left:962px;top:888px;width:15px;line-height:14px;color:#c07070">0</div>
<div class="t r" style="left:904px;top:888px;line-height:14px;">A4 neg (sbc)</div>
<div style="left:978px;top:893px;width:5px;height:3px;background:#808080;"></div>
<div style="left:1037px;top:742px;width:111px;height:61px;background:#fff;border:1px solid #808080;box-sizing:border-box;"></div>
<div style="left:1038px;top:743px;width:109px;height:29px;background:#c0c0c0;"></div>
<div style="left:1038px;top:772px;width:109px;height:1px;background:#808080;"></div>
<div class="t" style="left:1040px;top:744px;font-size:10.72px;line-height:14px;">&lt;Text eingeben&gt;</div>
<div class="t r" style="left:1040px;top:758px;line-height:12px;">Binär-Auslöser</div>
<svg class="a" style="left:1133px;top:748px" width="13" height="7" shape-rendering="crispEdges"><path d="M0 0h1v7h-1zM1 3h2v1h-2zM3 4h1v2h-1zM1 6h2v1h-2zM6 0h1v1h-1zM6 3h1v4h-1zM9 3h1v4h-1zM10 3h2v1h-2zM12 4h1v3h-1z" fill="#000"/></svg>
<div style="left:1074px;top:773px;width:1px;height:29px;background:#808080;"></div>
<div style="left:1038px;top:773px;width:15px;height:14px;background:#80ff80;"></div>
<div style="left:1053px;top:773px;width:1px;height:14px;background:#c0c0c0;"></div>
<div class="t rc" style="left:1038px;top:773px;width:15px;line-height:14px;color:#70ac70">0</div>
<div class="t r" style="left:1056px;top:773px;line-height:14px;">E1</div>
<div style="left:1038px;top:787px;width:36px;height:1px;background:#c0c0c0;"></div>
<div style="left:1032px;top:778px;width:5px;height:3px;background:#808080;"></div>
<div style="left:1132px;top:773px;width:15px;height:14px;background:#ff8080;"></div>
<div style="left:1131px;top:773px;width:1px;height:14px;background:#c0c0c0;"></div>
<div class="t rc" style="left:1132px;top:773px;width:15px;line-height:14px;color:#c07070">0</div>
<div class="t r" style="left:1077px;top:773px;line-height:14px;">A1 (E1&lt;&gt;0)</div>
<div style="left:1075px;top:787px;width:72px;height:1px;background:#c0c0c0;"></div>
<div style="left:1148px;top:778px;width:5px;height:3px;background:#808080;"></div>
<div style="left:1132px;top:788px;width:15px;height:14px;background:#ff8080;"></div>
<div style="left:1131px;top:788px;width:1px;height:14px;background:#c0c0c0;"></div>
<div class="t rc" style="left:1132px;top:788px;width:15px;line-height:14px;color:#c07070">0</div>
<div class="t r" style="left:1077px;top:788px;line-height:14px;">A2 (E1=0)</div>
<div style="left:1148px;top:793px;width:5px;height:3px;background:#808080;"></div>
<div style="left:1037px;top:842px;width:111px;height:61px;background:#fff;border:1px solid #808080;box-sizing:border-box;"></div>
<div style="left:1038px;top:843px;width:109px;height:29px;background:#c0c0c0;"></div>
<div style="left:1038px;top:872px;width:109px;height:1px;background:#808080;"></div>
<div class="t" style="left:1040px;top:844px;font-size:10.72px;line-height:14px;">&lt;Text eingeben&gt;</div>
<div class="t r" style="left:1040px;top:858px;line-height:12px;">Binär-Auslöser</div>
<svg class="a" style="left:1133px;top:848px" width="13" height="7" shape-rendering="crispEdges"><path d="M0 0h1v7h-1zM1 3h2v1h-2zM3 4h1v2h-1zM1 6h2v1h-2zM6 0h1v1h-1zM6 3h1v4h-1zM9 3h1v4h-1zM10 3h2v1h-2zM12 4h1v3h-1z" fill="#000"/></svg>
<div style="left:1074px;top:873px;width:1px;height:29px;background:#808080;"></div>
<div style="left:1038px;top:873px;width:15px;height:14px;background:#80ff80;"></div>
<div style="left:1053px;top:873px;width:1px;height:14px;background:#c0c0c0;"></div>
<div class="t rc" style="left:1038px;top:873px;width:15px;line-height:14px;color:#70ac70">0</div>
<div class="t r" style="left:1056px;top:873px;line-height:14px;">E1</div>
<div style="left:1038px;top:887px;width:36px;height:1px;background:#c0c0c0;"></div>
<div style="left:1032px;top:878px;width:5px;height:3px;background:#808080;"></div>
<div style="left:1132px;top:873px;width:15px;height:14px;background:#ff8080;"></div>
<div style="left:1131px;top:873px;width:1px;height:14px;background:#c0c0c0;"></div>
<div class="t rc" style="left:1132px;top:873px;width:15px;line-height:14px;color:#c07070">0</div>
<div class="t r" style="left:1077px;top:873px;line-height:14px;">A1 (E1&lt;&gt;0)</div>
<div style="left:1075px;top:887px;width:72px;height:1px;background:#c0c0c0;"></div>
<div style="left:1148px;top:878px;width:5px;height:3px;background:#808080;"></div>
<div style="left:1132px;top:888px;width:15px;height:14px;background:#ff8080;"></div>
<div style="left:1131px;top:888px;width:1px;height:14px;background:#c0c0c0;"></div>
<div class="t rc" style="left:1132px;top:888px;width:15px;line-height:14px;color:#c07070">0</div>
<div class="t r" style="left:1077px;top:888px;line-height:14px;">A2 (E1=0)</div>
<div style="left:1148px;top:893px;width:5px;height:3px;background:#808080;"></div>
<div style="left:622px;top:897px;width:166px;height:91px;background:#fff;border:1px solid #808080;box-sizing:border-box;"></div>
<div style="left:623px;top:898px;width:164px;height:29px;background:#c0c0c0;"></div>
<div style="left:623px;top:927px;width:164px;height:1px;background:#808080;"></div>
<div class="t" style="left:625px;top:899px;font-size:10.67px;line-height:14px;">Wenn Einspeisung &gt; 1600W</div>
<div class="t r" style="left:625px;top:913px;line-height:12px;">Grösser</div>
<svg class="a" style="left:774px;top:902px" width="10" height="10"><path d="M1.5 1.5L8.100 4.6L1.5 7.700" fill="none" stroke="#000" stroke-width="1.800" stroke-linecap="square"/></svg>
<div style="left:688px;top:928px;width:1px;height:59px;background:#808080;"></div>
<div style="left:623px;top:928px;width:25px;height:14px;background:#80ff80;"></div>
<div style="left:648px;top:928px;width:1px;height:14px;background:#c0c0c0;"></div>
<div class="t rc" style="left:623px;top:928px;width:25px;line-height:14px;color:#70ac70">0</div>
<div class="t r" style="left:651px;top:928px;line-height:14px;">E1</div>
<div style="left:623px;top:942px;width:65px;height:1px;background:#c0c0c0;"></div>
<div style="left:617px;top:933px;width:5px;height:3px;background:#808080;"></div>
<div style="left:623px;top:943px;width:25px;height:14px;background:#ffff80;"></div>
<div style="left:648px;top:943px;width:1px;height:14px;background:#c0c0c0;"></div>
<div class="t rc" style="left:623px;top:943px;width:25px;line-height:14px;color:#000">1600</div>
<div class="t r" style="left:651px;top:943px;line-height:14px;">E2</div>
<div style="left:623px;top:957px;width:65px;height:1px;background:#c0c0c0;"></div>
<div style="left:617px;top:948px;width:5px;height:3px;background:#808080;"></div>
<div style="left:772px;top:928px;width:15px;height:14px;background:#ff8080;"></div>
<div style="left:771px;top:928px;width:1px;height:14px;background:#c0c0c0;"></div>
<div class="t rc" style="left:772px;top:928px;width:15px;line-height:14px;color:#c07070">0</div>
<div class="t r" style="left:691px;top:928px;line-height:14px;">A1</div>
<div style="left:689px;top:942px;width:98px;height:1px;background:#c0c0c0;"></div>
<div style="left:788px;top:933px;width:5px;height:3px;background:#808080;"></div>
<div style="left:772px;top:943px;width:15px;height:14px;background:#ff8080;"></div>
<div style="left:771px;top:943px;width:1px;height:14px;background:#c0c0c0;"></div>
<div class="t rc" style="left:772px;top:943px;width:15px;line-height:14px;color:#c07070">0</div>
<div class="t r" style="left:691px;top:943px;line-height:14px;">A2 neg</div>
<div style="left:689px;top:957px;width:98px;height:1px;background:#c0c0c0;"></div>
<div style="left:788px;top:948px;width:5px;height:3px;background:#808080;"></div>
<div style="left:772px;top:958px;width:15px;height:14px;background:#ff8080;"></div>
<div style="left:771px;top:958px;width:1px;height:14px;background:#c0c0c0;"></div>
<div class="t rc" style="left:772px;top:958px;width:15px;line-height:14px;color:#c07070">0</div>
<div class="t r" style="left:691px;top:958px;line-height:14px;">A3 (sbc)</div>
<div style="left:689px;top:972px;width:98px;height:1px;background:#c0c0c0;"></div>
<div style="left:788px;top:963px;width:5px;height:3px;background:#808080;"></div>
<div style="left:772px;top:973px;width:15px;height:14px;background:#ff8080;"></div>
<div style="left:771px;top:973px;width:1px;height:14px;background:#c0c0c0;"></div>
<div class="t rc" style="left:772px;top:973px;width:15px;line-height:14px;color:#c07070">0</div>
<div class="t r" style="left:691px;top:973px;line-height:14px;">A4 neg (sbc)</div>
<div style="left:788px;top:978px;width:5px;height:3px;background:#808080;"></div>
<svg class="a" style="left:0;top:0" width="1451" height="1049" shape-rendering="crispEdges"><polyline points="485.5,149.5 555.5,149.5" fill="none" stroke="#808080" stroke-width="1"/><polyline points="485.5,159.5 513.5,159.5 513.5,234.5 555.5,234.5" fill="none" stroke="#808080" stroke-width="1"/><polyline points="485.5,174.5 503.5,174.5 503.5,164.5 555.5,164.5" fill="none" stroke="#808080" stroke-width="1"/><polyline points="485.5,184.5 503.5,184.5 503.5,219.5 555.5,219.5" fill="none" stroke="#808080" stroke-width="1"/><polyline points="665.5,149.5 755.5,149.5" fill="none" stroke="#808080" stroke-width="1"/><polyline points="665.5,219.5 683.5,219.5 683.5,164.5 755.5,164.5" fill="none" stroke="#808080" stroke-width="1"/><polyline points="540.5,299.5 630.5,299.5" fill="none" stroke="#808080" stroke-width="1"/><polyline points="540.5,309.5 613.5,309.5 613.5,454.5 630.5,454.5" fill="none" stroke="#808080" stroke-width="1"/><polyline points="540.5,319.5 603.5,319.5 603.5,554.5 870.5,554.5" fill="none" stroke="#808080" stroke-width="1"/><polyline points="540.5,329.5 593.5,329.5 593.5,764.5 630.5,764.5" fill="none" stroke="#808080" stroke-width="1"/><polyline points="540.5,339.5 583.5,339.5 583.5,934.5 620.5,934.5" fill="none" stroke="#808080" stroke-width="1"/><polyline points="540.5,354.5 573.5,354.5 573.5,624.5 870.5,624.5" fill="none" stroke="#808080" stroke-width="1"/><polyline points="540.5,364.5 563.5,364.5 563.5,674.5 630.5,674.5" fill="none" stroke="#808080" stroke-width="1"/><polyline points="540.5,379.5 773.5,379.5 773.5,639.5 870.5,639.5" fill="none" stroke="#808080" stroke-width="1"/><polyline points="540.5,394.5 763.5,394.5 763.5,794.5 865.5,794.5" fill="none" stroke="#808080" stroke-width="1"/><polyline points="540.5,404.5 553.5,404.5 553.5,849.5 863.5,849.5" fill="none" stroke="#808080" stroke-width="1"/><polyline points="530.5,664.5 623.5,664.5 623.5,314.5 630.5,314.5" fill="none" stroke="#808080" stroke-width="1"/><polyline points="530.5,674.5 543.5,674.5 543.5,469.5 630.5,469.5" fill="none" stroke="#808080" stroke-width="1"/><polyline points="530.5,769.5 563.5,769.5 563.5,779.5 630.5,779.5" fill="none" stroke="#808080" stroke-width="1"/><polyline points="530.5,779.5 543.5,779.5 543.5,879.5 865.5,879.5" fill="none" stroke="#808080" stroke-width="1"/><polyline points="745.5,299.5 870.5,299.5" fill="none" stroke="#808080" stroke-width="1"/><polyline points="745.5,314.5 870.5,314.5" fill="none" stroke="#808080" stroke-width="1"/><polyline points="750.5,454.5 870.5,454.5" fill="none" stroke="#808080" stroke-width="1"/><polyline points="750.5,469.5 870.5,469.5" fill="none" stroke="#808080" stroke-width="1"/><polyline points="985.5,329.5 1035.5,329.5" fill="none" stroke="#808080" stroke-width="1"/><polyline points="985.5,484.5 1035.5,484.5" fill="none" stroke="#808080" stroke-width="1"/><polyline points="1150.5,329.5 1235.5,329.5" fill="none" stroke="#808080" stroke-width="1"/><polyline points="1150.5,484.5 1163.5,484.5 1163.5,339.5 1235.5,339.5" fill="none" stroke="#808080" stroke-width="1"/><polyline points="980.5,554.5 1035.5,554.5" fill="none" stroke="#808080" stroke-width="1"/><polyline points="1145.5,554.5 1173.5,554.5 1173.5,359.5 1235.5,359.5" fill="none" stroke="#808080" stroke-width="1"/><polyline points="980.5,624.5 1183.5,624.5 1183.5,374.5 1235.5,374.5" fill="none" stroke="#808080" stroke-width="1"/><polyline points="745.5,674.5 773.5,674.5 773.5,749.5 865.5,749.5" fill="none" stroke="#808080" stroke-width="1"/><polyline points="750.5,764.5 865.5,764.5" fill="none" stroke="#808080" stroke-width="1"/><polyline points="750.5,779.5 865.5,779.5" fill="none" stroke="#808080" stroke-width="1"/><polyline points="980.5,779.5 1035.5,779.5" fill="none" stroke="#808080" stroke-width="1"/><polyline points="980.5,879.5 1035.5,879.5" fill="none" stroke="#808080" stroke-width="1"/><polyline points="1150.5,779.5 1230.5,779.5" fill="none" stroke="#808080" stroke-width="1"/><polyline points="1150.5,879.5 1163.5,879.5 1163.5,809.5 1230.5,809.5" fill="none" stroke="#808080" stroke-width="1"/><polyline points="790.5,934.5 803.5,934.5 803.5,864.5 865.5,864.5" fill="none" stroke="#808080" stroke-width="1"/></svg>
<div style="left:860px;top:846px;width:7px;height:7px;border-radius:4px;background:#000"></div>
</div>
<!-- v scrollbar -->
<div style="left:1421px;top:108px;width:16px;height:892px;background:#f0f0f0"></div>
<div style="left:1420px;top:108px;width:17px;height:16px;background:#f0f0f0;box-shadow:inset -1px -1px 0 #696969,inset 1px 1px 0 #fff,inset -2px -2px 0 #a0a0a0"></div>
<svg class="a" style="left:1425px;top:113px" width="8" height="5"><path d="M0 4.5L4 0.5L8 4.5z" fill="#000"/></svg>
<div style="left:1420px;top:124px;width:17px;height:543px;background:#f0f0f0;box-shadow:inset -1px -1px 0 #696969,inset 1px 1px 0 #fff,inset -2px -2px 0 #a0a0a0"></div>
<div style="left:1421px;top:667px;width:16px;height:317px;background:repeating-conic-gradient(#fff 0 25%,#ececec 0 50%) 0 0/2px 2px"></div>
<div style="left:1420px;top:984px;width:17px;height:16px;background:#f0f0f0;box-shadow:inset -1px -1px 0 #696969,inset 1px 1px 0 #fff,inset -2px -2px 0 #a0a0a0"></div>
<svg class="a" style="left:1425px;top:990px" width="8" height="5"><path d="M0 0.5L4 4.5L8 0.5z" fill="#000"/></svg>
<!-- h scrollbar -->
<div style="left:328px;top:1001px;width:1092px;height:16px;background:repeating-conic-gradient(#fff 0 25%,#ececec 0 50%) 0 0/2px 2px"></div>
<div style="left:328px;top:1001px;width:17px;height:16px;background:#e9e9e9"></div>
<svg class="a" style="left:334px;top:1004px" width="5" height="8"><path d="M4.5 0L0.5 4L4.5 8z" fill="#303030"/></svg>
<div style="left:345px;top:1001px;width:578px;height:16px;background:#f0f0f0;box-shadow:inset -1px -1px 0 #696969,inset 1px 1px 0 #fff,inset -2px -2px 0 #a0a0a0"></div>
<div style="left:1403px;top:1001px;width:17px;height:16px;background:#e9e9e9"></div>
<svg class="a" style="left:1410px;top:1004px" width="5" height="8"><path d="M0.5 0L4.5 4L0.5 8z" fill="#303030"/></svg>
<div style="left:1420px;top:1000px;width:17px;height:17px;background:#f0f0f0"></div>
<!-- status bar -->
<div style="left:8px;top:1024px;width:1434px;height:1px;background:#f8f8f8"></div><div style="left:8px;top:1025px;width:1434px;height:1px;background:#a0a0a0"></div>
<div style="left:8px;top:1040px;width:1435px;height:1px;background:#fff"></div>
<div class="t" style="left:10px;top:1027px;font-size:11.5px;line-height:13px;color:#000;transform:scaleX(.93);transform-origin:0 0">Pos: 17 x 1</div>
<svg class="a" style="left:1430px;top:1028px" width="12" height="12"><path d="M12 1L1 12M12 5L5 12M12 9L9 12" stroke="#9a9a9a" stroke-width="1.2"/><path d="M12 2L2 12M12 6L6 12M12 10L10 12" stroke="#fff" stroke-width="1"/></svg>
</div></body></html>
